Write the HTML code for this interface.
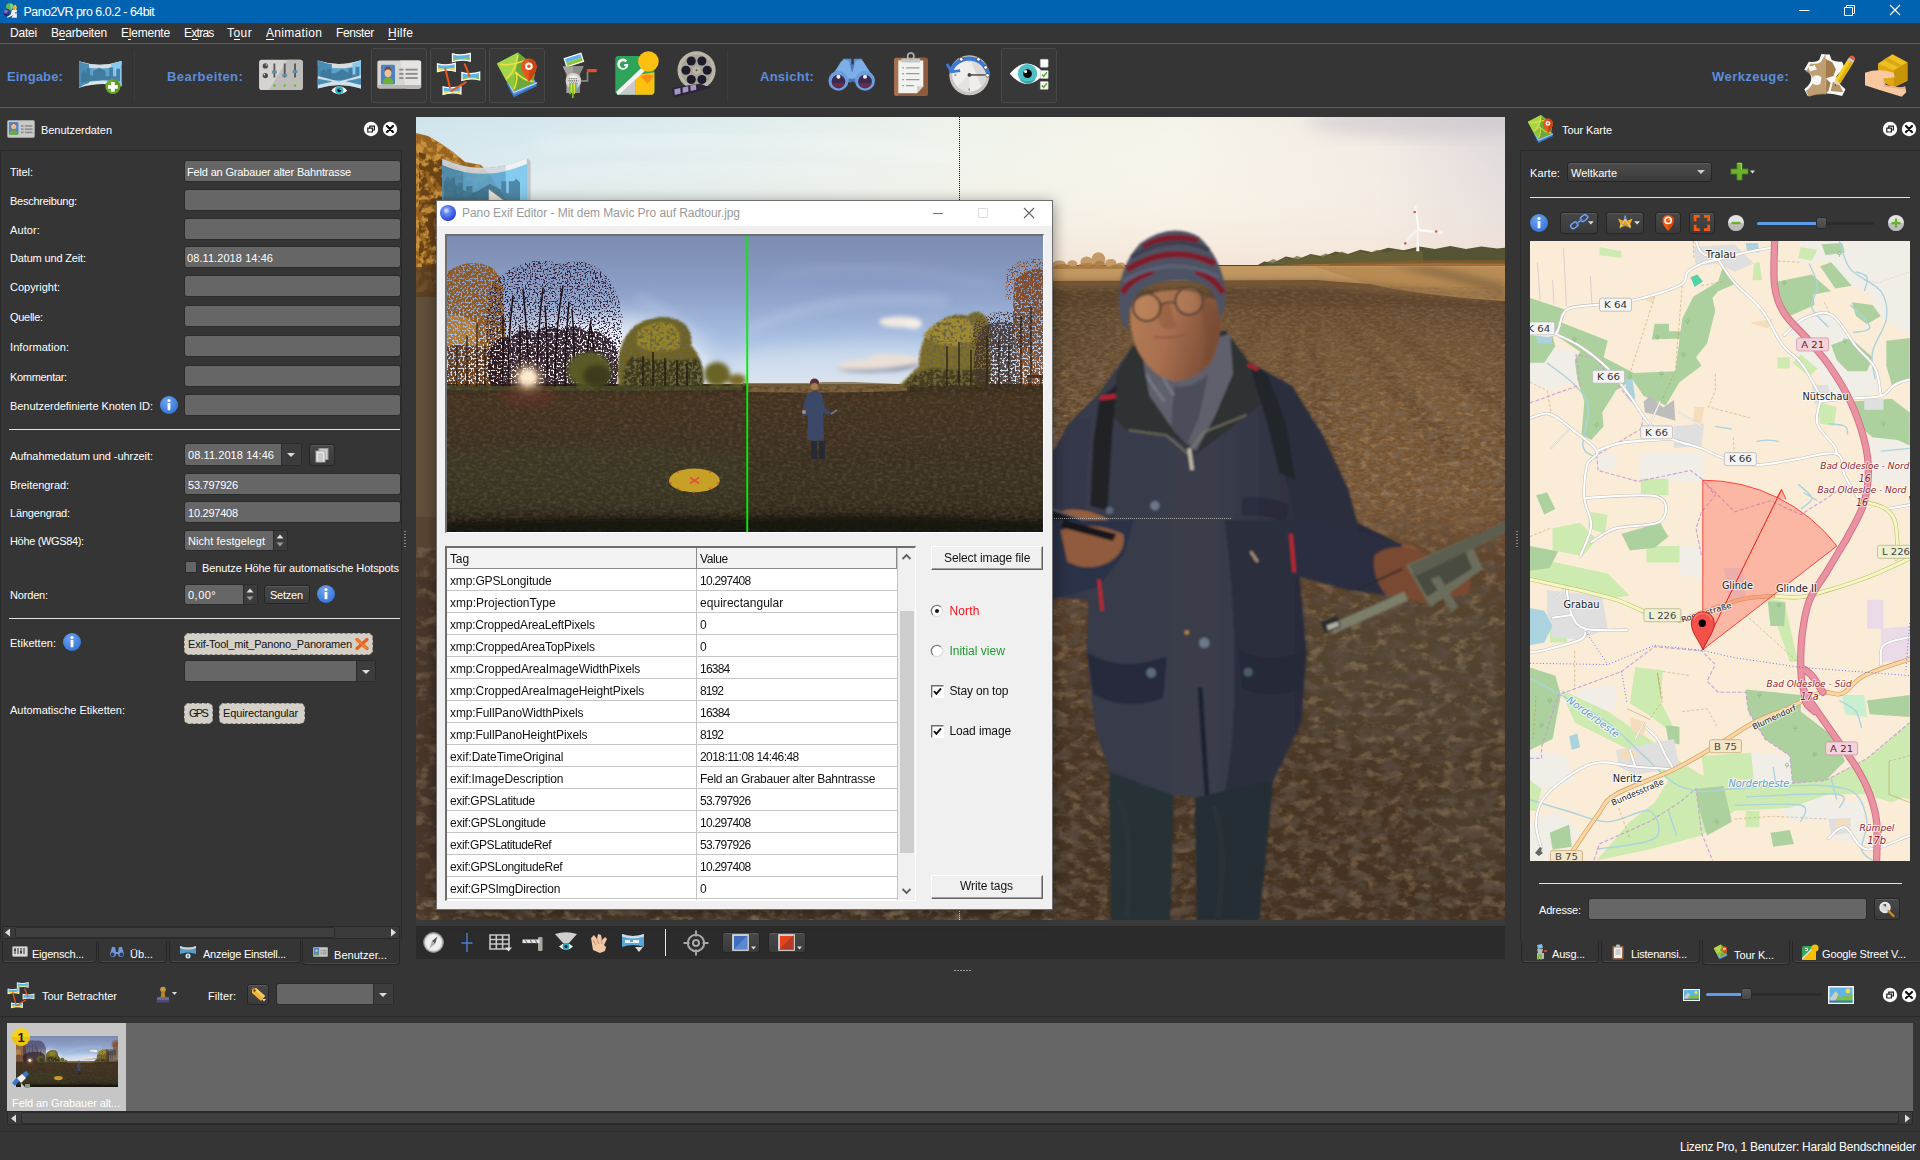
<!DOCTYPE html>
<html lang="de"><head><meta charset="utf-8"><title>Pano2VR pro 6.0.2 - 64bit</title>
<style>
html,body{margin:0;padding:0;background:#353535;overflow:hidden}
#app{position:relative;width:1920px;height:1160px;overflow:hidden;background:#353535;font-family:"Liberation Sans",sans-serif;font-size:11px;color:#fff}
#app div,#app span.t,#app svg{position:absolute;box-sizing:border-box}
span.t{white-space:pre;display:block}
.fld{background:#666;border-radius:2px;box-shadow:0 0 0 1px #2b2b2b}
.btn{background:linear-gradient(#484848,#3a3a3a);border:1px solid #262626;border-radius:3px;box-shadow:inset 0 1px 0 #5a5a5a}
.pressed{background:#383838;border:1px solid #484848;border-radius:3px}
.chip{background:#d4d0c8;border:1px dashed #8a8780;border-radius:5px}
.tab{background:#353535;border:1px solid #262626;border-top:none;border-radius:0 0 4px 4px;box-shadow:inset 0 -1px 0 #484848}
.sep{background:#e6e6e6;height:1px}
.circ{background:#fff;border-radius:50%}

</style></head>
<body>
<div id="app">
<div style="left:0px;top:0px;width:1920px;height:23px;background:#0063b1"></div>
<svg style="left:0px;top:0px" width="60" height="24" viewBox="0 0 1920 768">
<path d="M195 170q40-80 120-60 60-20 100 30l-10 130-60 70-90-40-60-50z" fill="#5cb85a"/><path d="M330 120q60-10 80 40l-10 110-50 40z" fill="#8ed0a0"/>
<path d="M420 190l70-50 50 90-20 90-100 10z" fill="#fbc21a"/><path d="M420 190l40-30 20 160-60 10z" fill="#f89a10"/>
<path d="M380 320l160 0 0 250-170 0 40-90-60 40-110 50-20-30 120-80z" fill="#f2f0ee"/><path d="M470 400l70-20v40l-60 10z" fill="#2a62c0"/>
<circle cx="212" cy="392" r="110" fill="#3c3a8c"/><circle cx="185" cy="360" r="60" fill="#7a8ad0" opacity="0.800"/><path d="M110 430a110 110 0 0 0 200 20q-100 40-200-20z" fill="#241a5c"/>
</svg>
<span class="t" id="t0" style="left:23.5px;top:3.70px;font-size:12.4px;line-height:16px;color:#fff;letter-spacing:-0.501px;">Pano2VR pro 6.0.2 - 64bit</span>
<svg style="left:1790px;top:0" width="130" height="23" viewBox="0 0 130 23" fill="none" stroke="#fff" stroke-width="1">
<path d="M9 10.5H19.5"/><path d="M54.5 7.5h8v8h-8z M56.5 7.5v-2h8v8h-2"/><path d="M100 5l10 10M110 5l-10 10" stroke-width="1.2"/></svg>
<div style="left:0px;top:23px;width:1920px;height:20px;background:#353535"></div>
<div style="left:0px;top:43px;width:1920px;height:1px;background:#5e5e5e"></div>
<span class="t" id="t1" style="left:10px;top:24.84px;font-size:12px;line-height:16px;color:#fff;letter-spacing:-0.226px;">Datei</span>
<span class="t" id="t2" style="left:51px;top:24.84px;font-size:12px;line-height:16px;color:#fff;letter-spacing:-0.215px;">Bearbeiten</span>
<span class="t" id="t3" style="left:121px;top:24.84px;font-size:12px;line-height:16px;color:#fff;letter-spacing:-0.227px;">Elemente</span>
<span class="t" id="t4" style="left:184px;top:24.84px;font-size:12px;line-height:16px;color:#fff;letter-spacing:-0.730px;">Extras</span>
<span class="t" id="t5" style="left:227px;top:24.84px;font-size:12px;line-height:16px;color:#fff;letter-spacing:0.473px;">Tour</span>
<span class="t" id="t6" style="left:266px;top:24.84px;font-size:12px;line-height:16px;color:#fff;letter-spacing:0.309px;">Animation</span>
<span class="t" id="t7" style="left:336px;top:24.84px;font-size:12px;line-height:16px;color:#fff;letter-spacing:-0.413px;">Fenster</span>
<span class="t" id="t8" style="left:388px;top:24.84px;font-size:12px;line-height:16px;color:#fff;letter-spacing:0.219px;">Hilfe</span>
<div style="left:59px;top:39px;width:6px;height:1px;background:#fff"></div>
<div style="left:128px;top:39px;width:3px;height:1px;background:#fff"></div>
<div style="left:192px;top:39px;width:6px;height:1px;background:#fff"></div>
<div style="left:234px;top:39px;width:6px;height:1px;background:#fff"></div>
<div style="left:266px;top:39px;width:8px;height:1px;background:#fff"></div>
<div style="left:388px;top:39px;width:8px;height:1px;background:#fff"></div>
<div style="left:0px;top:107px;width:1920px;height:1px;background:#5e5e5e"></div>
<span class="t" id="t9" style="left:7px;top:68.50px;font-size:13px;line-height:16px;color:#5b8ddb;font-weight:bold;letter-spacing:0.146px;">Eingabe:</span>
<span class="t" id="t10" style="left:167px;top:68.50px;font-size:13px;line-height:16px;color:#5b8ddb;font-weight:bold;letter-spacing:0.426px;">Bearbeiten:</span>
<span class="t" id="t11" style="left:760px;top:68.50px;font-size:13px;line-height:16px;color:#5b8ddb;font-weight:bold;letter-spacing:0.267px;">Ansicht:</span>
<span class="t" id="t12" style="left:1712px;top:68.50px;font-size:13px;line-height:16px;color:#5b8ddb;font-weight:bold;letter-spacing:0.449px;">Werkzeuge:</span>
<div style="left:134px;top:50px;width:1px;height:52px;background:#3d3d3d"></div>
<div style="left:727px;top:50px;width:1px;height:52px;background:#3d3d3d"></div>
<div class="pressed" style="left:371px;top:48px;width:56px;height:55px;"></div>
<div class="pressed" style="left:430px;top:48px;width:56px;height:55px;"></div>
<div class="pressed" style="left:489px;top:48px;width:56px;height:55px;"></div>
<div class="pressed" style="left:1001px;top:48px;width:56px;height:55px;"></div>
<svg style="left:0px;top:0px" width="240" height="145" viewBox="0 0 1920 1160">
<path d="M632 490Q800 545 972 488V690Q800 650 632 702z" fill="#5aa2cc"/><path d="M632 490Q800 545 972 488V520Q800 575 632 522z" fill="#d8dcdd"/><path d="M632 672Q800 622 972 660V690Q800 650 632 702z" fill="#e2e2e2"/>
<path d="M632 490Q670 505 712 514V664Q670 672 632 702z" fill="#4a8cb4"/><path d="M888 512Q930 503 972 488V690Q930 672 888 664z" fill="#86c8ee"/>
<path d="M650 640V590l20-30 20 30v-40h30v50l25 10v-40l50-30 50 30v40h30v-70h30v70h25v-60h30v100Q800 625 650 660z" fill="#3c7698" opacity="0.850"/>
<circle cx="903" cy="692" r="60" fill="#6aaa2c"/><path d="M903 632a60 60 0 0 1 0 120z" fill="#5c9a24"/><path d="M888 655h30v24h24v30h-24v24h-30v-24h-24v-30h24z" fill="#fff"/></svg>
<svg style="left:250px;top:44px" width="300" height="64" viewBox="0 0 1920 409.600">
<rect x="58" y="100" width="280" height="195" rx="18" fill="#d5d3d0"/><path d="M240 100h80a18 18 0 0 1 18 18v159a18 18 0 0 1-18 18H120z" fill="#bfbdba"/>
<circle cx="98" cy="140" r="17" fill="#4a4a4a"/><circle cx="98" cy="202" r="17" fill="#4a4a4a"/><circle cx="104" cy="134" r="5" fill="#ddd"/><circle cx="92" cy="196" r="5" fill="#ddd"/>
<path d="M156 125v90M222 125v90M288 125v90" stroke="#5a5a5a" stroke-width="12"/><rect x="140" y="170" width="32" height="18" fill="#6a8ea0"/><rect x="206" y="192" width="32" height="18" fill="#6a8ea0"/><rect x="272" y="168" width="32" height="18" fill="#6a8ea0"/>
<circle cx="156" cy="265" r="8" fill="#6cc024"/><circle cx="222" cy="265" r="8" fill="#6cc024"/><circle cx="288" cy="265" r="8" fill="#6cc024"/>
<path d="M434 106Q570 150 710 104V285Q570 240 434 285z" fill="#5aa2cc"/><path d="M434 106Q570 150 710 104V132Q570 178 434 134z" fill="#d8dcdd"/><path d="M434 106Q490 125 524 130V250Q480 262 434 285z" fill="#4a8cb4"/><path d="M656 124Q690 115 710 104V285Q680 270 656 262z" fill="#86c8ee"/>
<path d="M450 215V180l20-20 20 20v-20h30v30l30-5 40-25 40 25v-30h25v40h20v-50h25v60l8 3v30Q570 215 450 250z" fill="#3c7698" opacity="0.850"/>
<path d="M434 205L570 240 710 200V285Q570 240 434 285z" fill="#dfe7ec" opacity="0.900"/><path d="M434 222L530 240 434 262zM710 218L612 238 710 262z" fill="#4a8cb4"/>
<path d="M520 297Q570 245 622 297Q570 345 520 297z" fill="#fff"/><circle cx="571" cy="296" r="26" fill="#38b0c0"/><circle cx="571" cy="296" r="12" fill="#111"/><circle cx="577" cy="290" r="4" fill="#fff"/>
<rect x="815" y="105" width="280" height="180" rx="14" fill="#d8d6d3"/><path d="M960 105h121a14 14 0 0 1 14 14v152a14 14 0 0 1-14 14H1000z" fill="#e6e4e1"/><path d="M815 262h280v9a14 14 0 0 1-14 14H829a14 14 0 0 1-14-14z" fill="#b8b6b3"/>
<rect x="838" y="132" width="90" height="125" rx="8" fill="#4a82c4"/><path d="M848 257q0-42 35-42t35 42z" fill="#6cae38"/><ellipse cx="883" cy="186" rx="22" ry="27" fill="#f0c098"/><path d="M860 180q0-34 23-34t23 34q-8-18-23-18t-23 18z" fill="#7a4a28"/>
<rect x="955" y="158" width="28" height="12" fill="#8e8c8a"/><rect x="995" y="158" width="78" height="12" fill="#8e8c8a"/><rect x="955" y="185" width="28" height="12" fill="#8e8c8a"/><rect x="995" y="185" width="78" height="12" fill="#8e8c8a"/><rect x="955" y="212" width="28" height="12" fill="#8e8c8a"/><rect x="995" y="212" width="78" height="12" fill="#8e8c8a"/>

<g><path d="M1292 58Q1352 75 1414 55V115Q1352 98 1292 118z" fill="#fff"/><path d="M1300 68Q1352 82 1406 65V90Q1352 100 1300 92z" fill="#58b2ec"/><path d="M1300 90Q1352 100 1406 88V106Q1352 92 1300 108z" fill="#86c83c"/></g>
<g><path d="M1196 122Q1256 139 1318 119V179Q1256 162 1196 182z" fill="#fff"/><path d="M1204 132Q1256 146 1310 129V154Q1256 164 1204 156z" fill="#58b2ec"/><path d="M1204 154Q1256 164 1310 152V170Q1256 156 1204 172z" fill="#f4d63c"/></g>
<g><path d="M1352 178Q1412 195 1474 175V235Q1412 218 1352 238z" fill="#fff"/><path d="M1360 188Q1412 202 1466 185V210Q1412 220 1360 212z" fill="#58b2ec"/><path d="M1360 210Q1412 220 1466 208V226Q1412 212 1360 228z" fill="#86c83c"/></g>
<g><path d="M1232 268Q1292 285 1354 265V325Q1292 308 1232 328z" fill="#fff"/><path d="M1240 278Q1292 292 1346 275V300Q1292 310 1240 302z" fill="#58b2ec"/><path d="M1240 300Q1292 310 1346 298V316Q1292 302 1240 318z" fill="#f4d63c"/></g>
<path d="M1250 160L1280 280M1290 300L1380 245M1375 130L1405 205" stroke="#e8581c" stroke-width="13" stroke-linecap="round"/>
<path d="M1640 250L1790 200 1838 268 1688 340z" fill="#3c74c4"/><path d="M1640 235L1790 185 1838 255 1688 326z" fill="#5a9ae0"/><path d="M1640 220l48 90 150-62" fill="none" stroke="#e8e8e8" stroke-width="6"/>
<path d="M1580 125L1715 55 1830 150 1812 250 1690 300 1640 235z" fill="#8cc63c"/><path d="M1715 55L1830 150 1812 250 1690 300 1700 180z" fill="#6ca838"/><path d="M1580 125L1715 55 1700 180 1640 235z" fill="#a4d64c"/>
<path d="M1600 130Q1680 140 1760 105M1640 220Q1700 180 1715 70M1690 290Q1720 220 1700 180 1760 240 1815 240" fill="none" stroke="#f0e040" stroke-width="10"/>
<path d="M1785 92a50 50 0 0 1 50 50c0 40-50 100-50 100s-50-60-50-100a50 50 0 0 1 50-50z" fill="#e8581c"/><path d="M1785 92a50 50 0 0 1 50 50c0 40-50 100-50 100z" fill="#c84410"/><circle cx="1785" cy="142" r="24" fill="#fff"/><circle cx="1785" cy="142" r="11" fill="#e8581c"/>
</svg>
<svg style="left:550px;top:44px" width="300" height="64" viewBox="0 0 1920 409.600">
<g transform="rotate(-18 150 100)"><rect x="92" y="72" width="120" height="62" fill="#fff"/><rect x="100" y="80" width="104" height="24" fill="#62b4ee"/><rect x="100" y="104" width="104" height="22" fill="#8cc83c"/></g>
<path d="M80 142h135l-25 52v120H105V194z" fill="#a8a6a2"/><path d="M148 142h67l-25 52v120h-42z" fill="#8e8c88"/><circle cx="150" cy="236" r="50" fill="#d4d2ce"/><circle cx="150" cy="236" r="36" fill="#f0f0ee"/><path d="M120 222h60M118 236h64M122 250h56" stroke="#444" stroke-width="7" stroke-dasharray="7 5"/>
<path d="M200 236h40v-58" fill="none" stroke="#888" stroke-width="11"/><rect x="236" y="160" width="64" height="20" rx="8" fill="#e0502c"/>
<path d="M128 250v72M146 250v95M164 250v60" stroke="#7cc424" stroke-width="11"/><path d="M137 250v60M156 250v70" stroke="#f0e040" stroke-width="7"/><path d="M172 250v44" stroke="#62b4ee" stroke-width="7"/>
<rect x="418" y="76" width="250" height="248" rx="20" fill="#2ea45a"/><path d="M545 200L668 180V304a20 20 0 0 1-20 20H545z" fill="#fcc010"/><path d="M438 324L545 215V324z" fill="#c8c8c8"/>
<path d="M424 306L606 132l22 22L440 324h-8z" fill="#f4f4f4"/><path d="M580 205q50-20 88 0l-44 50z" fill="#f89010"/>
<circle cx="630" cy="112" r="66" fill="#fcc010"/>
<path d="M500 128h-24v14h10q-4 12-16 12a22 22 0 1 1 14-38l10-10a36 36 0 1 0 8 22z" fill="#fff"/>
<circle cx="938" cy="168" r="122" fill="#bab6a8"/><circle cx="938" cy="168" r="100" fill="#a8a496"/>
<g fill="#1e1c2c"><circle cx="1006" cy="168" r="29"/><circle cx="972" cy="109" r="29"/><circle cx="904" cy="109" r="29"/><circle cx="870" cy="168" r="29"/><circle cx="904" cy="227" r="29"/><circle cx="972" cy="227" r="29"/></g>
<circle cx="938" cy="168" r="24" fill="#bab6a8"/><circle cx="938" cy="168" r="7" fill="#555"/>
<path d="M780 280L960 255 1030 280 790 345z" fill="#2a2638"/><path d="M796 290l38-8 2 34-38 10zM848 278l36-8 2 34-36 10zM898 266l36-6 2 32-36 8z" fill="#a894c4"/>
</svg>
<svg style="left:810px;top:44px" width="300" height="64" viewBox="0 0 1920 409.600">
<path d="M210 95h55v150h-55zM280 95h55v150h-55z" fill="#5a8ed0"/><rect x="250" y="130" width="40" height="110" fill="#4a78b8"/>
<path d="M200 110q20-20 50 0l30 110H130z" fill="#7eaee8"/><path d="M290 110q30-20 50 0l70 110H260z" fill="#7eaee8"/>
<circle cx="182" cy="235" r="64" fill="#6a9ee0"/><circle cx="352" cy="235" r="64" fill="#6a9ee0"/><circle cx="182" cy="240" r="44" fill="#3c2a4c"/><circle cx="352" cy="240" r="44" fill="#3c2a4c"/><path d="M140 250a44 44 0 0 0 84 0z" fill="#6a2a4a"/><path d="M310 250a44 44 0 0 0 84 0z" fill="#6a2a4a"/><circle cx="182" cy="210" r="13" fill="#f0f0f0"/><circle cx="352" cy="210" r="13" fill="#f0f0f0"/>
<rect x="538" y="88" width="215" height="245" rx="14" fill="#a87250"/><path d="M700 88h39a14 14 0 0 1 14 14v217a14 14 0 0 1-14 14H560z" fill="#8e5c3c"/>
<path d="M565 105h160v165l-40 45H565z" fill="#f2f2f0"/><path d="M725 270l-40 45v-45z" fill="#cfcfcc"/><rect x="585" y="92" width="120" height="26" rx="6" fill="#c4c8c4"/><circle cx="645" cy="78" r="20" fill="none" stroke="#b4b8b4" stroke-width="10"/>
<path d="M590 152h12M615 152h85M590 190h12M615 190h85M590 228h12M615 228h85M590 266h12M615 266h50" stroke="#9a9a98" stroke-width="8"/>
<circle cx="1020" cy="200" r="128" fill="#c8c4c0"/><circle cx="1020" cy="195" r="110" fill="#f0eeec"/><path d="M1020 85a110 110 0 0 1 78 188z" fill="#dcdad8"/><path d="M1020 305a110 110 0 0 1-78-32l78-78z" fill="#e4e2e0"/>
<path d="M900 178A125 125 0 0 1 1142 200" fill="none" stroke="#3c7ad8" stroke-width="26"/><path d="M876 128l30 50 55-8" fill="none" stroke="#3c7ad8" stroke-width="18"/>
<path d="M1020 198h100" stroke="#555" stroke-width="10"/><circle cx="1020" cy="198" r="12" fill="#444"/>
<g fill="#fff" stroke="#222" stroke-width="4"><circle cx="968" cy="98" r="12"/><circle cx="1078" cy="98" r="12"/><circle cx="1124" cy="150" r="12"/><circle cx="1136" cy="200" r="12"/></g>
<rect x="1014" y="100" width="10" height="12" fill="#888"/><rect x="1014" y="285" width="10" height="12" fill="#888"/><rect x="924" y="194" width="12" height="10" fill="#888"/>
<path d="M1278 190Q1390 60 1500 190Q1390 320 1278 190z" fill="#fff"/><circle cx="1392" cy="190" r="62" fill="#4cc0c4"/><path d="M1340 224a62 62 0 0 0 104 0q-52 30-104 0z" fill="#38a4a8"/><circle cx="1392" cy="190" r="28" fill="#050505"/><circle cx="1380" cy="176" r="10" fill="#fff"/>
<g><rect x="1474" y="98" width="50" height="50" rx="4" fill="#fff" stroke="#bbb" stroke-width="4"/><rect x="1474" y="170" width="50" height="50" rx="4" fill="#fff" stroke="#bbb" stroke-width="4"/><rect x="1474" y="240" width="50" height="50" rx="4" fill="#fff" stroke="#bbb" stroke-width="4"/>
<path d="M1484 195l12 12 20-26M1484 265l12 12 20-26" fill="none" stroke="#5cb02c" stroke-width="10"/></g>
</svg>
<svg style="left:1700px;top:44px" width="220" height="64" viewBox="0 0 1920 558.500">
<path d="M1060 88q40 6 70 2l20 50q40 20 90 14l30 70q-60 20-80 60 10 60 80 110l-30 60q-160-50-300 0l-30-60q70-50 60-110-10-40-60-60l40-70q60 10 90-14z" fill="#f8f8f6"/>
<path d="M1095 90l5 350q-70-6-150 20l-25-50q70-50 60-110-10-40-60-60l40-70q60 10 90-14z" fill="#b89464" opacity="0.900"/>
<path d="M1095 130l60 30 30 60-20 60-70 20z" fill="#a47c4c"/><path d="M990 280q40-20 70 10l-10 60q-40 20-80-10z" fill="#f8f8f6"/><path d="M1160 330l60 30 30 60-110-10z" fill="#b89464"/><path d="M940 190q40 10 60-10l20 40-60 20z" fill="#f8f8f6"/><path d="M1100 300l40 40-20 70-20 20z" fill="#a47c4c"/>
<g transform="rotate(32 1250 250)"><rect x="1222" y="130" width="56" height="210" fill="#f4d020"/><rect x="1250" y="130" width="28" height="210" fill="#e0b010"/><path d="M1222 340h56l-28 52z" fill="#f0d0a0"/><path d="M1240 372h20l-10 20z" fill="#444"/><rect x="1222" y="108" width="56" height="26" fill="#c8c8c8"/><path d="M1222 108a28 28 0 0 1 56 0z" fill="#e0603c"/></g>
<path d="M1555 170L1680 90l130 70v160l-120 60-135-70z" fill="#f0c020"/><path d="M1555 170l135 60v150l-135-70z" fill="#e0a810"/><path d="M1690 230l120-70v160l-120 60z" fill="#c89408"/><path d="M1600 140l130 62 30-18-126-66z" fill="#d8a818"/>
<path d="M1440 250q120-40 250 0l10 40-100 10 20 60 130 20 40-10 10 50-40 40-200-60-120-40z" fill="#f8c8a0"/><path d="M1600 300l20 60 130 20 40-10 5 30-190-30z" fill="#e8b088"/>
</svg>
<div style="left:0px;top:150px;width:402px;height:790px;border-top:1px solid #2a2a2a;border-left:1px solid #2a2a2a;border-right:1px solid #2a2a2a;background:#353535"></div>
<svg style="left:7px;top:120px" width="28" height="18" viewBox="0 0 44 28" preserveAspectRatio="none">
<rect x="0.5" y="0.5" width="43" height="27" rx="3" fill="#c9c9c7" stroke="#9b9b99"/>
<rect x="3" y="3" width="15" height="20" rx="1.5" fill="#4f86c6"/>
<circle cx="10.5" cy="10" r="4" fill="#f0b98a"/><path d="M6.5 8.5q4-5 8 0v-1q-4-4-8 0z" fill="#7a4a24"/>
<path d="M4 23q0-7 6.5-7t6.500 7z" fill="#6bab3a"/>
<rect x="22" y="8" width="4" height="2.600" fill="#8d8d8b"/><rect x="28" y="8" width="12" height="2.600" fill="#8d8d8b"/>
<rect x="22" y="13" width="4" height="2.600" fill="#8d8d8b"/><rect x="28" y="13" width="12" height="2.600" fill="#8d8d8b"/>
<rect x="22" y="18" width="4" height="2.600" fill="#8d8d8b"/><rect x="28" y="18" width="12" height="2.600" fill="#8d8d8b"/></svg>
<span class="t" id="t13" style="left:41px;top:122.19px;font-size:11px;line-height:16px;color:#fff;letter-spacing:-0.045px;">Benutzerdaten</span>
<svg style="left:363px;top:121px" width="35" height="16" viewBox="0 0 35 16">
<circle cx="8" cy="8" r="7.2" fill="#fff"/><circle cx="27" cy="8" r="7.2" fill="#fff"/>
<path d="M4.8 7.2h4.6v3.8H4.8z M6.8 7v-1.8h4.6v3.8H9.6" fill="none" stroke="#222" stroke-width="1.2"/>
<path d="M24 5l6 6M30 5l-6 6" stroke="#111" stroke-width="2.2" stroke-linecap="round"/></svg>
<span class="t" id="t14" style="left:10px;top:164.19px;font-size:11px;line-height:16px;color:#fff;letter-spacing:-0.080px;">Titel:</span>
<div class="fld" style="left:185px;top:161px;width:215px;height:20px;"></div>
<span class="t" id="t15" style="left:10px;top:193.19px;font-size:11px;line-height:16px;color:#fff;letter-spacing:-0.266px;">Beschreibung:</span>
<div class="fld" style="left:185px;top:190px;width:215px;height:20px;"></div>
<span class="t" id="t16" style="left:10px;top:222.19px;font-size:11px;line-height:16px;color:#fff;letter-spacing:0.116px;">Autor:</span>
<div class="fld" style="left:185px;top:219px;width:215px;height:20px;"></div>
<span class="t" id="t17" style="left:10px;top:250.19px;font-size:11px;line-height:16px;color:#fff;letter-spacing:-0.156px;">Datum und Zeit:</span>
<div class="fld" style="left:185px;top:247px;width:215px;height:20px;"></div>
<span class="t" id="t18" style="left:10px;top:279.19px;font-size:11px;line-height:16px;color:#fff;letter-spacing:-0.015px;">Copyright:</span>
<div class="fld" style="left:185px;top:276px;width:215px;height:20px;"></div>
<span class="t" id="t19" style="left:10px;top:309.19px;font-size:11px;line-height:16px;color:#fff;letter-spacing:-0.286px;">Quelle:</span>
<div class="fld" style="left:185px;top:306px;width:215px;height:20px;"></div>
<span class="t" id="t20" style="left:10px;top:339.19px;font-size:11px;line-height:16px;color:#fff;letter-spacing:0.079px;">Information:</span>
<div class="fld" style="left:185px;top:336px;width:215px;height:20px;"></div>
<span class="t" id="t21" style="left:10px;top:369.19px;font-size:11px;line-height:16px;color:#fff;letter-spacing:-0.308px;">Kommentar:</span>
<div class="fld" style="left:185px;top:366px;width:215px;height:20px;"></div>
<span class="t" id="t22" style="left:10px;top:398.19px;font-size:11px;line-height:16px;color:#fff;letter-spacing:-0.046px;">Benutzerdefinierte Knoten ID:</span>
<div class="fld" style="left:185px;top:395px;width:215px;height:20px;"></div>
<span class="t" id="t23" style="left:187px;top:164.19px;font-size:11px;line-height:16px;color:#fff;letter-spacing:-0.165px;">Feld an Grabauer alter Bahntrasse</span>
<span class="t" id="t24" style="left:187px;top:250.19px;font-size:11px;line-height:16px;color:#fff;letter-spacing:0.076px;">08.11.2018 14:46</span>
<svg style="left:159px;top:395px" width="20" height="20" viewBox="-10 -10 20 20">
<defs><radialGradient id="ig169405" cx="0.4" cy="0.3" r="0.8"><stop offset="0" stop-color="#6fa3ee"/><stop offset="1" stop-color="#2f6fd6"/></radialGradient></defs>
<circle r="9" fill="url(#ig169405)"/><circle cx="0" cy="-4.600" r="1.500" fill="#fff"/><rect x="-1.400" y="-2" width="2.800" height="7.200" rx="0.600" fill="#fff"/></svg>
<div style="left:9px;top:429px;width:391px;height:2px;background:#e4e4e4;height:1px"></div>
<span class="t" id="t25" style="left:10px;top:448.19px;font-size:11px;line-height:16px;color:#fff;letter-spacing:-0.073px;">Aufnahmedatum und -uhrzeit:</span>
<div class="fld" style="left:185px;top:444px;width:116px;height:21px;"></div>
<div style="left:281px;top:444px;width:20px;height:21px;background:#3c3c3c;border-left:1px solid #2b2b2b;border-radius:0 2px 2px 0"></div>
<svg style="left:287px;top:453.0px" width="8" height="5" viewBox="0 0 8 5"><path d="M0 0h8l-4 4z" fill="#ddd"/></svg>
<span class="t" id="t26" style="left:188px;top:447.19px;font-size:11px;line-height:16px;color:#fff;letter-spacing:0.076px;">08.11.2018 14:46</span>
<div class="btn" style="left:309px;top:444px;width:26px;height:22px;"></div>
<svg style="left:315px;top:448px" width="14" height="15" viewBox="0 0 14 15"><rect x="4" y="0.500" width="9" height="11" fill="#cfcfcf" stroke="#9a9a9a"/><rect x="1" y="3" width="9" height="11" fill="#e9e9e9" stroke="#a5a5a5"/><path d="M3 6h5M3 8h5M3 10h5M3 12h5" stroke="#aaa"/></svg>
<span class="t" id="t27" style="left:10px;top:477.19px;font-size:11px;line-height:16px;color:#fff;letter-spacing:-0.082px;">Breitengrad:</span>
<div class="fld" style="left:185px;top:474px;width:215px;height:20px;"></div>
<span class="t" id="t28" style="left:188px;top:477.19px;font-size:11px;line-height:16px;color:#fff;letter-spacing:-0.235px;">53.797926</span>
<span class="t" id="t29" style="left:10px;top:505.19px;font-size:11px;line-height:16px;color:#fff;letter-spacing:-0.170px;">Längengrad:</span>
<div class="fld" style="left:185px;top:502px;width:215px;height:20px;"></div>
<span class="t" id="t30" style="left:188px;top:505.19px;font-size:11px;line-height:16px;color:#fff;letter-spacing:-0.235px;">10.297408</span>
<span class="t" id="t31" style="left:10px;top:533.19px;font-size:11px;line-height:16px;color:#fff;letter-spacing:-0.340px;">Höhe (WGS84):</span>
<div class="fld" style="left:185px;top:531px;width:102px;height:19px;"></div>
<svg style="left:273px;top:531px" width="14" height="19" viewBox="0 0 14 19"><rect x="0" y="0" width="14" height="19" fill="#3c3c3c"/><rect x="0" y="0" width="1" height="19" fill="#2b2b2b"/><path d="M3.500 7.5h7l-3.500-4z" fill="#ddd"/><path d="M3.500 11.5h7l-3.500 4z" fill="#999"/></svg>
<span class="t" id="t32" style="left:188px;top:533.19px;font-size:11px;line-height:16px;color:#fff;letter-spacing:0.076px;">Nicht festgelegt</span>
<div style="left:185px;top:561px;width:12px;height:12px;background:#666;border:1px solid #2b2b2b"></div>
<span class="t" id="t33" style="left:202px;top:560.19px;font-size:11px;line-height:16px;color:#fff;letter-spacing:-0.095px;">Benutze Höhe für automatische Hotspots</span>
<span class="t" id="t34" style="left:10px;top:587.19px;font-size:11px;line-height:16px;color:#fff;letter-spacing:-0.175px;">Norden:</span>
<div class="fld" style="left:185px;top:585px;width:72px;height:19px;"></div>
<svg style="left:243px;top:585px" width="14" height="19" viewBox="0 0 14 19"><rect x="0" y="0" width="14" height="19" fill="#3c3c3c"/><rect x="0" y="0" width="1" height="19" fill="#2b2b2b"/><path d="M3.500 7.5h7l-3.500-4z" fill="#ddd"/><path d="M3.500 11.5h7l-3.500 4z" fill="#999"/></svg>
<span class="t" id="t35" style="left:188px;top:587.19px;font-size:11px;line-height:16px;color:#fff;letter-spacing:0.486px;">0,00°</span>
<div class="btn" style="left:264px;top:585px;width:46px;height:19px;"></div>
<span class="t" id="t36" style="left:270px;top:587.19px;font-size:11px;line-height:16px;color:#fff;letter-spacing:-0.227px;">Setzen</span>
<svg style="left:316px;top:584px" width="20" height="20" viewBox="-10 -10 20 20">
<defs><radialGradient id="ig326594" cx="0.4" cy="0.3" r="0.8"><stop offset="0" stop-color="#6fa3ee"/><stop offset="1" stop-color="#2f6fd6"/></radialGradient></defs>
<circle r="9" fill="url(#ig326594)"/><circle cx="0" cy="-4.600" r="1.500" fill="#fff"/><rect x="-1.400" y="-2" width="2.800" height="7.200" rx="0.600" fill="#fff"/></svg>
<div style="left:9px;top:618px;width:391px;height:2px;background:#e4e4e4;height:1px"></div>
<span class="t" id="t37" style="left:10px;top:635.19px;font-size:11px;line-height:16px;color:#fff;letter-spacing:0.015px;">Etiketten:</span>
<svg style="left:62px;top:632px" width="20" height="20" viewBox="-10 -10 20 20">
<defs><radialGradient id="ig72642" cx="0.4" cy="0.3" r="0.8"><stop offset="0" stop-color="#6fa3ee"/><stop offset="1" stop-color="#2f6fd6"/></radialGradient></defs>
<circle r="9" fill="url(#ig72642)"/><circle cx="0" cy="-4.600" r="1.500" fill="#fff"/><rect x="-1.400" y="-2" width="2.800" height="7.200" rx="0.600" fill="#fff"/></svg>
<div class="chip" style="left:184px;top:633px;width:189px;height:22px;"></div>
<span class="t" id="t38" style="left:188px;top:636.19px;font-size:11px;line-height:16px;color:#111;letter-spacing:-0.203px;">Exif-Tool_mit_Panono_Panoramen</span>
<svg style="left:355px;top:637px" width="14" height="14" viewBox="0 0 14 14"><path d="M2 2.500l10 9M12 2.500l-10 9" stroke="#e8621c" stroke-width="3.200" stroke-linecap="round"/><path d="M2 2.500l10 9" stroke="#f08b3c" stroke-width="1.200" stroke-linecap="round"/></svg>
<div class="fld" style="left:185px;top:661px;width:190px;height:20px;"></div>
<div style="left:356px;top:661px;width:19px;height:20px;background:#3c3c3c;border-left:1px solid #2b2b2b;border-radius:0 2px 2px 0"></div>
<svg style="left:362px;top:670.0px" width="8" height="5" viewBox="0 0 8 5"><path d="M0 0h8l-4 4z" fill="#ddd"/></svg>
<span class="t" id="t39" style="left:10px;top:702.19px;font-size:11px;line-height:16px;color:#fff;letter-spacing:-0.025px;">Automatische Etiketten:</span>
<div class="chip" style="left:184px;top:703px;width:29px;height:21px;"></div>
<span class="t" id="t40" style="left:189px;top:705.19px;font-size:11px;line-height:16px;color:#111;letter-spacing:-1.694px;">GPS</span>
<div class="chip" style="left:219px;top:703px;width:86px;height:21px;"></div>
<span class="t" id="t41" style="left:223px;top:705.19px;font-size:11px;line-height:16px;color:#111;letter-spacing:-0.142px;">Equirectangular</span>
<div style="left:404px;top:531px;width:2px;height:1px;background:#888"></div>
<div style="left:404px;top:534px;width:2px;height:1px;background:#888"></div>
<div style="left:404px;top:537px;width:2px;height:1px;background:#888"></div>
<div style="left:404px;top:540px;width:2px;height:1px;background:#888"></div>
<div style="left:404px;top:543px;width:2px;height:1px;background:#888"></div>
<div style="left:404px;top:546px;width:2px;height:1px;background:#888"></div>
<div style="left:2px;top:926px;width:398px;height:13px;background:#3b3b3b;border:1px solid #2a2a2a"></div>
<div style="left:15px;top:927px;width:320px;height:11px;background:#3f3f3f;border:1px solid #2c2c2c;border-radius:2px"></div>
<svg style="left:4px;top:928px" width="8" height="9" viewBox="0 0 8 9"><path d="M6 0.500v8l-5-4z" fill="#ddd"/></svg>
<svg style="left:389px;top:928px" width="8" height="9" viewBox="0 0 8 9"><path d="M2 0.500v8l5-4z" fill="#ddd"/></svg>
<div class="tab" style="left:2px;top:941px;width:95px;height:22px;"></div>
<div class="tab" style="left:98px;top:941px;width:69px;height:22px;"></div>
<div class="tab" style="left:169px;top:941px;width:132px;height:22px;"></div>
<div class="tab" style="left:302px;top:940px;width:98px;height:25px;border-color:#262626;background:#353535"></div>
<span class="t" id="t42" style="left:32px;top:946.19px;font-size:11px;line-height:16px;color:#fff;letter-spacing:-0.231px;">Eigensch...</span>
<span class="t" id="t43" style="left:130px;top:946.19px;font-size:11px;line-height:16px;color:#fff;letter-spacing:-0.052px;">Üb...</span>
<span class="t" id="t44" style="left:203px;top:946.19px;font-size:11px;line-height:16px;color:#fff;letter-spacing:-0.240px;">Anzeige Einstell...</span>
<span class="t" id="t45" style="left:334px;top:947.19px;font-size:11px;line-height:16px;color:#fff;letter-spacing:0.039px;">Benutzer...</span>
<svg style="left:12px;top:946px" width="16" height="12" viewBox="0 0 16 12"><rect x="0.500" y="0.500" width="15" height="10" rx="1" fill="#d8d8d8" stroke="#999"/><path d="M3 2v6M6 2v6M9 2v6M12 2v6" stroke="#666" stroke-width="1.500"/><rect x="2" y="3" width="2" height="2" fill="#444"/><rect x="8" y="5" width="2" height="2" fill="#444"/></svg>
<svg style="left:109px;top:946px" width="16" height="12" viewBox="0 0 16 12"><path d="M3 1h3l1 5h2l1-5h3l2 7a3 3 0 0 1-6 0h-2a3 3 0 0 1-6 0z" fill="#6d9ad6"/><circle cx="3.500" cy="8.500" r="2" fill="#3c3560"/><circle cx="12.500" cy="8.500" r="2" fill="#3c3560"/></svg>
<svg style="left:180px;top:946px" width="16" height="13" viewBox="0 0 16 13"><path d="M0 0q8 3 16 0v8q-8-3-16 0z" fill="#5a9cc8"/><path d="M0 0q8 3 16 0v2q-8 3-16 0z" fill="#d5d5d5"/><circle cx="8" cy="10" r="2.500" fill="#e8e8e8"/><circle cx="8" cy="10" r="1.200" fill="#2a9aa8"/></svg>
<svg style="left:313px;top:947px" width="15" height="10" viewBox="0 0 44 28" preserveAspectRatio="none">
<rect x="0.5" y="0.5" width="43" height="27" rx="3" fill="#c9c9c7" stroke="#9b9b99"/>
<rect x="3" y="3" width="15" height="20" rx="1.5" fill="#4f86c6"/>
<circle cx="10.5" cy="10" r="4" fill="#f0b98a"/><path d="M6.5 8.5q4-5 8 0v-1q-4-4-8 0z" fill="#7a4a24"/>
<path d="M4 23q0-7 6.5-7t6.500 7z" fill="#6bab3a"/>
<rect x="22" y="8" width="4" height="2.600" fill="#8d8d8b"/><rect x="28" y="8" width="12" height="2.600" fill="#8d8d8b"/>
<rect x="22" y="13" width="4" height="2.600" fill="#8d8d8b"/><rect x="28" y="13" width="12" height="2.600" fill="#8d8d8b"/>
<rect x="22" y="18" width="4" height="2.600" fill="#8d8d8b"/><rect x="28" y="18" width="12" height="2.600" fill="#8d8d8b"/></svg>
<div style="left:1520px;top:150px;width:400px;height:790px;border-top:1px solid #2a2a2a;border-left:1px solid #2a2a2a;background:#353535"></div>
<svg style="left:1527px;top:114px" width="27" height="30" viewBox="1572 46 274 304"><path d="M1640 250L1790 200 1838 268 1688 340z" fill="#3c74c4"/><path d="M1640 235L1790 185 1838 255 1688 326z" fill="#5a9ae0"/><path d="M1640 220l48 90 150-62" fill="none" stroke="#e8e8e8" stroke-width="6"/>
<path d="M1580 125L1715 55 1830 150 1812 250 1690 300 1640 235z" fill="#8cc63c"/><path d="M1715 55L1830 150 1812 250 1690 300 1700 180z" fill="#6ca838"/><path d="M1580 125L1715 55 1700 180 1640 235z" fill="#a4d64c"/>
<path d="M1600 130Q1680 140 1760 105M1640 220Q1700 180 1715 70M1690 290Q1720 220 1700 180 1760 240 1815 240" fill="none" stroke="#f0e040" stroke-width="10"/>
<path d="M1785 92a50 50 0 0 1 50 50c0 40-50 100-50 100s-50-60-50-100a50 50 0 0 1 50-50z" fill="#e8581c"/><path d="M1785 92a50 50 0 0 1 50 50c0 40-50 100-50 100z" fill="#c84410"/><circle cx="1785" cy="142" r="24" fill="#fff"/><circle cx="1785" cy="142" r="11" fill="#e8581c"/>
</svg>
<span class="t" id="t46" style="left:1562px;top:122.19px;font-size:11px;line-height:16px;color:#fff;letter-spacing:-0.079px;">Tour Karte</span>
<svg style="left:1882px;top:121px" width="35" height="16" viewBox="0 0 35 16">
<circle cx="8" cy="8" r="7.2" fill="#fff"/><circle cx="27" cy="8" r="7.2" fill="#fff"/>
<path d="M4.8 7.2h4.6v3.8H4.8z M6.8 7v-1.8h4.6v3.8H9.6" fill="none" stroke="#222" stroke-width="1.2"/>
<path d="M24 5l6 6M30 5l-6 6" stroke="#111" stroke-width="2.2" stroke-linecap="round"/></svg>
<span class="t" id="t47" style="left:1530px;top:165.19px;font-size:11px;line-height:16px;color:#fff;letter-spacing:0.116px;">Karte:</span>
<div style="left:1567px;top:162px;width:145px;height:20px;background:linear-gradient(#4b4b4b,#3c3c3c);border:1px solid #252525;border-radius:3px;box-shadow:inset 0 1px 0 #5c5c5c"></div>
<span class="t" id="t48" style="left:1571px;top:165.19px;font-size:11px;line-height:16px;color:#fff;letter-spacing:-0.031px;">Weltkarte</span>
<svg style="left:1697px;top:170.0px" width="8" height="5" viewBox="0 0 8 5"><path d="M0 0h8l-4 4z" fill="#ccc"/></svg>
<svg style="left:1730px;top:162px" width="28" height="20" viewBox="0 0 28 20"><path d="M7 1h5v6h6v5h-6v6h-5v-6h-6v-5h6z" fill="#6bb12c" stroke="#4a8a18" stroke-width="0.800"/><path d="M7.500 1.500h4v6" stroke="#9ad85a" fill="none"/><path d="M20 8.500h5l-2.500 3z" fill="#ddd"/></svg>
<div style="left:1530px;top:197px;width:380px;height:1px;background:#e4e4e4"></div>
<svg style="left:1529px;top:213px" width="20" height="20" viewBox="-10 -10 20 20">
<defs><radialGradient id="ig1539223" cx="0.4" cy="0.3" r="0.8"><stop offset="0" stop-color="#6fa3ee"/><stop offset="1" stop-color="#2f6fd6"/></radialGradient></defs>
<circle r="9" fill="url(#ig1539223)"/><circle cx="0" cy="-4.600" r="1.500" fill="#fff"/><rect x="-1.400" y="-2" width="2.800" height="7.200" rx="0.600" fill="#fff"/></svg>
<div class="btn" style="left:1560px;top:212px;width:38px;height:22px;"></div>
<div class="btn" style="left:1606px;top:212px;width:38px;height:22px;"></div>
<div class="btn" style="left:1655px;top:212px;width:26px;height:22px;"></div>
<div class="btn" style="left:1689px;top:212px;width:26px;height:22px;"></div>
<svg style="left:1525px;top:205px" width="200" height="36" viewBox="0 0 1920 345.600">
<g fill="none" stroke-linecap="round"><g transform="rotate(-37 520 160)"><rect x="425" y="136" width="74" height="48" rx="24" stroke="#4a7ccc" stroke-width="17"/><rect x="541" y="136" width="74" height="48" rx="24" stroke="#4a7ccc" stroke-width="17"/><rect x="425" y="136" width="74" height="48" rx="24" stroke="#8ab4ec" stroke-width="8"/><rect x="541" y="136" width="74" height="48" rx="24" stroke="#8ab4ec" stroke-width="8"/><path d="M488 160h64" stroke="#3c6cbc" stroke-width="19"/><path d="M488 160h64" stroke="#7aa6e4" stroke-width="9"/></g></g>
<path d="M604 156h56l-28 30z" fill="#ddd"/>
<path d="M893 130l50 22 20-30 20 30 50-22-22 50 8 36-56-14-56 14 8-36z" fill="#f4b824"/><path d="M915 150l45 10 45-10-15 40-30 10-30-10z" fill="#e8a010"/>
<path d="M962 128l-48 96M962 128l48 96" stroke="#c8d0dc" stroke-width="9"/><path d="M932 190q30 16 60 0" fill="none" stroke="#5a8ad0" stroke-width="8"/><circle cx="962" cy="124" r="13" fill="#5a8ad0"/><path d="M962 100v20" stroke="#c8d0dc" stroke-width="8"/>
<path d="M1048 156h56l-28 30z" fill="#ddd"/>
<path d="M1374 95a55 55 0 0 1 55 55c0 40-55 98-55 98s-55-58-55-98a55 55 0 0 1 55-55z" fill="#f05a12"/><path d="M1374 95a55 55 0 0 1 55 55c0 40-55 98-55 98z" fill="#d84808"/><circle cx="1374" cy="148" r="30" fill="none" stroke="#fff" stroke-width="14"/><circle cx="1382" cy="142" r="7" fill="#fff"/>
<g fill="#f45a10"><path d="M1620 97h58v26h-32v34h-26z"/><path d="M1776 97h-58v26h32v34h26z"/><path d="M1620 250h58v-26h-32v-34h-26z"/><path d="M1776 250h-58v-26h32v-34h26z"/></g>
</svg>
<svg style="left:1727px;top:214px" width="18" height="18" viewBox="-9 -9 18 18"><circle r="8" fill="#e4e4e4"/><path d="M-8 0a8 8 0 0 0 16 0z" fill="#9a9a9a" opacity="0.550"/><path d="M-4.500 -1.200h9v2.400h-9z" fill="#6bb12c"/></svg>
<svg style="left:1887px;top:214px" width="18" height="18" viewBox="-9 -9 18 18"><circle r="8" fill="#e4e4e4"/><path d="M-8 0a8 8 0 0 0 16 0z" fill="#9a9a9a" opacity="0.550"/><path d="M-4.500 -1.200h9v2.400h-9z" fill="#6bb12c"/><path d="M-1.200 -4.500h2.400v9h-2.400z" fill="#6bb12c"/></svg>
<div style="left:1757px;top:221.5px;width:117px;height:3px;background:#2c2c2c;border-radius:2px;height:3px"></div>
<div style="left:1757px;top:221.5px;width:64px;height:3px;background:#5e9cf0;border-radius:2px;height:3px"></div>
<div style="left:1815.5px;top:217.0px;width:11px;height:12px;background:linear-gradient(#5a5a5a,#474747);border:1px solid #2a2a2a;border-radius:2.500px"></div>
<div style="left:1530px;top:241px;width:380px;height:620px;background:#f6e7d0"></div>
<div style="left:1539px;top:883px;width:363px;height:1px;background:#e4e4e4"></div>
<span class="t" id="t49" style="left:1539px;top:902.19px;font-size:11px;line-height:16px;color:#fff;letter-spacing:-0.190px;">Adresse:</span>
<div class="fld" style="left:1589px;top:899px;width:277px;height:20px;"></div>
<div class="btn" style="left:1874px;top:898px;width:26px;height:22px;"></div>
<svg style="left:1878px;top:901px" width="18" height="17" viewBox="0 0 18 17"><circle cx="7" cy="6.500" r="5" fill="#d8d8d8" stroke="#eee" stroke-width="1.400"/><path d="M5 4a3 3 0 0 1 3-1v3z" fill="#555"/><path d="M10.500 10l5 5" stroke="#c98a2c" stroke-width="2.400" stroke-linecap="round"/></svg>
<div class="tab" style="left:1521px;top:941px;width:78px;height:22px;"></div>
<div class="tab" style="left:1601px;top:941px;width:99px;height:22px;"></div>
<div class="tab" style="left:1702px;top:940px;width:88px;height:25px;"></div>
<div class="tab" style="left:1792px;top:941px;width:130px;height:22px;"></div>
<span class="t" id="t50" style="left:1552px;top:946.19px;font-size:11px;line-height:16px;color:#fff;letter-spacing:-0.192px;">Ausg...</span>
<span class="t" id="t51" style="left:1631px;top:946.19px;font-size:11px;line-height:16px;color:#fff;letter-spacing:-0.216px;">Listenansi...</span>
<span class="t" id="t52" style="left:1734px;top:947.19px;font-size:11px;line-height:16px;color:#fff;letter-spacing:-0.114px;">Tour K...</span>
<span class="t" id="t53" style="left:1822px;top:946.19px;font-size:11px;line-height:16px;color:#fff;letter-spacing:-0.139px;">Google Street V...</span>
<svg style="left:1534px;top:944px" width="14" height="16" viewBox="0 0 14 16"><path d="M3 1l5-1 1 4-5 1z" fill="#7fc0e8"/><path d="M3 5h6l-1 4h2v6h-7v-6h1z" fill="#b8b8b8"/><path d="M5 10l-1 6M7 10v6" stroke="#6bb12c" stroke-width="1.200"/><path d="M10 7h3" stroke="#e8602c" stroke-width="1.400"/></svg>
<svg style="left:1612px;top:944px" width="12" height="16" viewBox="0 0 12 16"><rect x="0.500" y="2" width="11" height="13.500" rx="1" fill="#9b6a48"/><rect x="2" y="3.500" width="8" height="10.500" fill="#efefef"/><rect x="4" y="0.500" width="4" height="3" rx="1" fill="#bbb"/><path d="M3.500 6h5M3.500 8h5M3.500 10h5" stroke="#aaa"/></svg>
<svg style="left:1713px;top:944px" width="15" height="16" viewBox="1572 46 274 304"><path d="M1640 250L1790 200 1838 268 1688 340z" fill="#3c74c4"/><path d="M1640 235L1790 185 1838 255 1688 326z" fill="#5a9ae0"/><path d="M1640 220l48 90 150-62" fill="none" stroke="#e8e8e8" stroke-width="6"/>
<path d="M1580 125L1715 55 1830 150 1812 250 1690 300 1640 235z" fill="#8cc63c"/><path d="M1715 55L1830 150 1812 250 1690 300 1700 180z" fill="#6ca838"/><path d="M1580 125L1715 55 1700 180 1640 235z" fill="#a4d64c"/>
<path d="M1600 130Q1680 140 1760 105M1640 220Q1700 180 1715 70M1690 290Q1720 220 1700 180 1760 240 1815 240" fill="none" stroke="#f0e040" stroke-width="10"/>
<path d="M1785 92a50 50 0 0 1 50 50c0 40-50 100-50 100s-50-60-50-100a50 50 0 0 1 50-50z" fill="#e8581c"/><path d="M1785 92a50 50 0 0 1 50 50c0 40-50 100-50 100z" fill="#c84410"/><circle cx="1785" cy="142" r="24" fill="#fff"/><circle cx="1785" cy="142" r="11" fill="#e8581c"/>
</svg>
<svg style="left:1802px;top:944px" width="17" height="16" viewBox="0 0 17 16"><rect x="0" y="2" width="14" height="14" rx="2" fill="#3aa757"/><path d="M0 16l14-14v14z" fill="#fbbc04"/><path d="M0 14l12-12h2l-14 14z" fill="#e8e8e8"/><circle cx="13" cy="4" r="3.600" fill="#fbbc04"/><path d="M3 4.500h2.500v2h-2" stroke="#fff" fill="none" stroke-width="0.900"/></svg>
<div style="left:1516px;top:531px;width:2px;height:1px;background:#888"></div>
<div style="left:1516px;top:534px;width:2px;height:1px;background:#888"></div>
<div style="left:1516px;top:537px;width:2px;height:1px;background:#888"></div>
<div style="left:1516px;top:540px;width:2px;height:1px;background:#888"></div>
<div style="left:1516px;top:543px;width:2px;height:1px;background:#888"></div>
<div style="left:1516px;top:546px;width:2px;height:1px;background:#888"></div>
<svg style="left:1530px;top:241px" width="380" height="620" viewBox="0 0 380 620"><rect width="380" height="620" fill="#fbecd7"/>
<g transform="translate(-5 -5) scale(0.275810)"><path d="M960 300 1100 280 1160 350 1240 420 1280 560 1180 600 1080 560 1060 480 980 420z M1000 18 1395 18 1395 360 1300 300 1240 200 1180 180 1100 90 1000 100z M18 390 190 420 200 520 100 560 18 540z M415 790 650 790 650 890 415 890z M260 790 330 790 330 850 260 850z M1290 640 1395 640 1395 900 1250 900 1240 760z M190 1644 330 1624 330 1714 200 1724z M18 1864 150 1884 180 1974 18 2024z M560 1124 640 1124 640 1244 560 1224z M820 1874 960 1884 970 1984 830 1974z M900 2024 1100 2024 1180 2124 960 2124z M18 2124 120 2084 200 2164 120 2264 18 2264z M1100 2054 1230 2044 1230 2204 1110 2184z" fill="#f1eee8"/><path d="M270 40 350 55 350 80 270 70z M1000 430 1060 480 1030 510 970 460z M915 440 960 440 960 480 915 480z M100 1060 200 1040 260 1100 210 1160 100 1140z M1000 40 1060 50 1040 90 990 80z M830 100 850 95 860 160 825 160z M420 880 520 880 520 940 420 940z M230 1000 300 1010 290 1080 230 1060z M1060 600 1130 620 1120 690 1070 680z M130 1644 300 1724 450 1824 560 1904 640 1954 760 1974 960 1984 1090 1974 1240 1894 1395 1764 1395 2024 1330 2054 1230 2024 1100 2024 960 2074 760 2084 640 2174 450 2224 260 2264 380 2124 470 2054 520 1974 420 1884 300 1824 180 1764z M400 1564 500 1574 490 1684 560 1824 460 1744 380 1694z M440 1124 560 1124 560 1184 440 1184z M18 1974 60 2004 40 2084 18 2084z M640 1884 820 1874 830 1974 650 1964z M1330 1884 1395 1874 1395 2044 1340 2024z M880 1314 940 1324 990 1544 960 1544z M18 1164 300 1224 380 1304 300 1314 18 1234z M90 1424 160 1424 150 1474 90 1474z M800 2084 850 2084 850 2144 800 2144z" fill="#cdebb0"/><path d="M1150 1664 1230 1664 1240 1744 1160 1734z" fill="#c8f0d0"/><path d="M18 225 150 268 125 330 110 355 18 355z M18 362 100 362 110 400 70 460 18 460z M128 312 300 380 285 440 395 497 545 490 570 300 610 220 700 165 720 105 760 175 700 200 680 225 690 270 660 390 620 440 640 470 560 530 510 615 430 580 390 520 330 560 280 640 285 690 240 740 205 720 215 600 190 520 180 450 200 420 120 365z M470 318 522 318 522 345 565 345 565 372 460 375z M915 165 1040 140 1110 200 1045 212 1050 250 960 290 925 240z M1070 110 1110 95 1185 180 1125 190z M1110 395 1180 370 1260 440 1240 490 1170 490 1130 450z M1185 240 1260 250 1290 290 1240 320 1200 290z M1310 380 1395 370 1395 520 1330 540 1310 470z M1190 600 1330 590 1395 640 1395 760 1350 740 1260 730 1200 680z M350 1080 490 1040 520 1090 470 1130 380 1140z M1075 30 1150 25 1160 60 1090 70z M40 940 80 930 110 990 70 1010z M18 1564 110 1594 130 1664 100 1824 18 1864z M800 1644 1000 1664 1000 1724 1130 1824 1160 1904 1090 1974 970 1984 960 1884 870 1824 810 1724z M620 2004 720 1994 750 2124 660 2174 630 2074z M1240 1684 1395 1664 1395 1744 1250 1734z M880 1324 945 1329 940 1414 890 1414z M18 1124 120 1144 90 1204 18 1214z M90 2164 160 2134 170 2214 100 2224z M890 2164 960 2154 975 2204 900 2214z M510 1774 560 1779 560 1844 520 1834z" fill="#add19e"/><path d="M610 40 760 30 830 100 760 130 700 100 620 110z M1040 540 1100 540 1110 600 1050 610z M540 690 650 680 640 760 540 770z M1230 590 1300 590 1300 630 1230 630z M80 1284 280 1304 300 1424 200 1464 100 1454 80 1374z M330 1864 540 1824 560 1924 400 1954 340 1924z M720 1204 790 1204 800 1324 740 1324z M1100 2114 1180 2109 1180 2164 1110 2174z" fill="#e0dfdf"/><path d="M430 600 455 580 500 622 540 595 545 670 480 650 435 640z" fill="#bdbdbd"/><path d="M1240 1319 1300 1319 1300 1424 1240 1424z M1290 1424 1395 1414 1395 1544 1290 1544z" fill="#ebdbe8"/><path d="M815 315 900 300 880 335z M420 225 470 215 465 245z M380 1744 440 1764 430 1814 385 1794z M350 1859 410 1869 400 1899 345 1894z M1130 2114 1175 2114 1170 2154 1130 2154z M615 620 650 620 640 680 610 670z" fill="#f5dcba"/><path d="M600 150 625 140 645 165 615 185z" fill="#0fc896" opacity="0.7"/><path d="M18 1349 70 1359 100 1414 70 1474 18 1484z M362 520 390 520 400 590 372 590z M40 360 100 365 95 390 45 388z M800 25 845 25 850 60 805 55z M160 1814 190 1804 200 1854 170 1864z" fill="#aad3df"/><path d="M1140 18 C1147 35 1155 90 1180 120 C1205 150 1268 170 1290 200 C1312 230 1315 263 1310 300 C1305 337 1267 383 1260 420 C1253 457 1268 503 1270 520 M1030 100 C1035 113 1058 153 1060 180 C1062 207 1033 235 1040 260 C1047 285 1090 318 1100 330 M80 460 C97 473 155 513 180 540 C205 567 225 583 230 620 C235 657 207 730 210 760 C213 790 243 793 250 800 M1395 770 L1290 780 M1180 250 C1192 263 1248 313 1250 330 C1252 347 1200 347 1190 350 M1200 130 C1207 133 1235 138 1240 150 C1245 162 1232 192 1230 200 M1100 680 C1110 682 1148 683 1160 690 C1172 697 1168 715 1170 720 M690 690 L750 700 M840 745 C847 744 867 740 880 740 C893 740 913 744 920 745 M18 1604 C37 1614 83 1637 130 1664 C177 1691 250 1727 300 1764 C350 1801 390 1847 430 1884 C470 1921 505 1962 540 1984 C575 2006 603 2011 640 2014 C677 2017 707 2007 760 2004 C813 2001 903 1996 960 1994 C1017 1992 1060 1989 1100 1994 C1140 1999 1177 2002 1200 2024 C1223 2046 1237 2091 1240 2124 C1243 2157 1217 2201 1220 2224 C1223 2247 1253 2257 1260 2264 M18 2044 C40 2051 103 2071 150 2084 C197 2097 250 2124 300 2124 C350 2124 422 2074 450 2084 C478 2094 502 2161 470 2184 C438 2207 295 2217 260 2224 M760 2064 C800 2064 960 2054 1000 2064 C1040 2074 1000 2114 1000 2124 M800 2034 C855 2032 1073 2017 1130 2024 C1187 2031 1138 2066 1140 2074 M900 1924 L910 1994 M1110 1964 L1130 2044 M520 2084 L550 2174 M1140 1684 C1150 1691 1187 1707 1200 1724 C1213 1741 1217 1774 1220 1784 M990 900 C998 908 1038 935 1040 950 C1042 965 1007 983 1000 990 M1010 930 L1060 960" fill="none" stroke="#aad3df" stroke-width="5"/><path d="M470 220 L380 500 M570 180 L545 490 L490 610 M690 500 L690 560 L665 620 L820 660 M755 730 L760 800 M610 18 L612 80 M1085 240 L1110 290 M18 530 L80 560 L95 640 M18 1090 L90 1060 M500 1579 L600 1594 M480 1584 L500 1684 L450 1754 M570 1724 L660 1714 L700 1784 M180 1504 L180 1644 M800 1374 L1000 1554 M40 1664 L30 1824 M340 2074 L380 2184 M760 2114 L900 2104 L1100 2114 M1320 1904 L1395 1884 M640 180 L720 165 M900 90 L1000 95" fill="none" stroke="#b8924a" stroke-width="2" stroke-dasharray="10 7" opacity="0.85"/><path d="M370 1714 L455 1754 M480 1584 L495 1684 M1320 1904 L1320 2024 L1395 2054" fill="none" stroke="#a8862c" stroke-width="2" opacity="0.8"/><path d="M45 95 L55 235 M100 160 L105 245 M140 45 L150 255 M237 145 L243 250" fill="none" stroke="#b8b0c8" stroke-width="2" opacity="0.9"/><path d="M1395 130 L1280 170 L1230 160 M1310 390 L1395 380 M1310 470 L1395 460" fill="none" stroke="#f0a0a0" stroke-width="2" stroke-dasharray="5 5" opacity="0.8"/><path d="M18 605 L200 540 L185 430 L250 440 L430 650 L420 700 L260 795 L265 850 L410 890 L600 850 L640 880 L690 940 L640 1000 L620 1060 L640 1160 M18 1894 L60 1894 L60 1854 L120 1664 L350 1579 L470 1489 L640 1504 L690 1554 L660 1614 L700 1654 L800 1654 L810 1724 L870 1824 L960 1884 L970 1984 L1090 1974 L1240 1894 L1395 1764 M250 2264 L270 2204 L450 2124 L560 2054 L620 2004 L640 2164 L680 2264 M640 880 L760 1000 L890 960 L1000 1010 L1080 960 L1170 900" fill="none" stroke="#c79bd6" stroke-width="4" stroke-dasharray="14 7" opacity="0.9"/><path d="M18 355 C33 355 88 370 110 355 C132 340 123 286 150 268 C177 250 231 254 270 248 C309 242 337 246 385 235 C433 224 526 198 560 180 C594 162 577 143 590 130 C603 117 622 108 640 100 C658 92 690 88 700 85 M110 355 C125 362 168 379 200 400 C232 421 270 450 300 480 C330 510 355 547 380 580 C405 613 425 654 450 680 C475 706 498 720 530 735 C562 750 608 758 640 770 C672 782 687 795 720 805 C753 815 797 829 840 830 C883 831 932 817 980 810 C1028 803 1100 780 1130 790 C1160 800 1146 842 1160 870 C1174 898 1206 945 1215 960 M700 85 C710 99 733 139 760 170 C787 201 832 233 860 270 C888 307 907 358 930 390 C953 422 978 432 1000 460 C1022 488 1048 537 1060 560 C1072 583 1068 593 1070 600 M1070 600 C1087 598 1133 593 1170 590 C1207 587 1262 588 1290 580 C1318 572 1322 550 1340 540 C1358 530 1386 523 1395 520 M1070 600 C1068 613 1052 653 1060 680 C1068 707 1108 742 1120 760 C1132 778 1128 785 1130 790 M940 360 C952 350 982 312 1010 300 C1038 288 1078 268 1110 285 C1142 302 1173 368 1200 400 C1227 432 1255 450 1270 480 C1285 510 1287 563 1290 580 M18 660 C30 658 65 638 90 645 C115 652 142 678 170 700 C198 722 251 758 260 780 C269 802 232 802 225 830 C218 858 212 913 215 950 C218 987 242 1015 240 1050 C238 1085 207 1142 200 1160 M260 780 C275 775 305 758 350 750 C395 742 500 738 530 735 M215 950 C259 949 434 931 480 945 C526 959 515 1016 490 1035 C465 1054 372 1048 330 1060 C288 1072 255 1102 240 1110 M700 85 C690 81 653 71 640 60 C627 49 623 25 620 18 M700 85 C717 81 766 68 800 60 C834 52 888 43 905 40 M1310 990 L1395 975 M150 1274 C153 1291 158 1349 170 1374 C182 1399 187 1415 220 1424 C253 1433 345 1428 370 1429 M170 1374 L100 1384 M220 1424 C217 1431 227 1451 200 1464 C173 1477 90 1496 60 1504 C30 1512 25 1508 18 1509 M540 1934 C535 1926 520 1902 510 1884 C500 1866 492 1841 480 1824 C468 1807 447 1791 440 1784 M540 1934 C517 1932 450 1927 400 1924 C350 1921 293 1897 240 1914 C187 1931 113 1989 80 2024 C47 2059 43 2091 40 2124 C37 2157 57 2207 60 2224 M380 1864 L400 1924 M1395 1454 C1379 1459 1318 1467 1300 1484 C1282 1501 1292 1542 1290 1554 M1100 2184 C1110 2177 1137 2137 1160 2144 C1183 2151 1201 2219 1240 2224 C1279 2229 1369 2182 1395 2174 M540 1934 C553 1927 593 1909 620 1894 C647 1879 687 1852 700 1844" fill="none" stroke="#c4c0ba" stroke-width="11.5" stroke-linecap="round" stroke-linejoin="round"/><path d="M18 355 C33 355 88 370 110 355 C132 340 123 286 150 268 C177 250 231 254 270 248 C309 242 337 246 385 235 C433 224 526 198 560 180 C594 162 577 143 590 130 C603 117 622 108 640 100 C658 92 690 88 700 85 M110 355 C125 362 168 379 200 400 C232 421 270 450 300 480 C330 510 355 547 380 580 C405 613 425 654 450 680 C475 706 498 720 530 735 C562 750 608 758 640 770 C672 782 687 795 720 805 C753 815 797 829 840 830 C883 831 932 817 980 810 C1028 803 1100 780 1130 790 C1160 800 1146 842 1160 870 C1174 898 1206 945 1215 960 M700 85 C710 99 733 139 760 170 C787 201 832 233 860 270 C888 307 907 358 930 390 C953 422 978 432 1000 460 C1022 488 1048 537 1060 560 C1072 583 1068 593 1070 600 M1070 600 C1087 598 1133 593 1170 590 C1207 587 1262 588 1290 580 C1318 572 1322 550 1340 540 C1358 530 1386 523 1395 520 M1070 600 C1068 613 1052 653 1060 680 C1068 707 1108 742 1120 760 C1132 778 1128 785 1130 790 M940 360 C952 350 982 312 1010 300 C1038 288 1078 268 1110 285 C1142 302 1173 368 1200 400 C1227 432 1255 450 1270 480 C1285 510 1287 563 1290 580 M18 660 C30 658 65 638 90 645 C115 652 142 678 170 700 C198 722 251 758 260 780 C269 802 232 802 225 830 C218 858 212 913 215 950 C218 987 242 1015 240 1050 C238 1085 207 1142 200 1160 M260 780 C275 775 305 758 350 750 C395 742 500 738 530 735 M215 950 C259 949 434 931 480 945 C526 959 515 1016 490 1035 C465 1054 372 1048 330 1060 C288 1072 255 1102 240 1110 M700 85 C690 81 653 71 640 60 C627 49 623 25 620 18 M700 85 C717 81 766 68 800 60 C834 52 888 43 905 40 M1310 990 L1395 975 M150 1274 C153 1291 158 1349 170 1374 C182 1399 187 1415 220 1424 C253 1433 345 1428 370 1429 M170 1374 L100 1384 M220 1424 C217 1431 227 1451 200 1464 C173 1477 90 1496 60 1504 C30 1512 25 1508 18 1509 M540 1934 C535 1926 520 1902 510 1884 C500 1866 492 1841 480 1824 C468 1807 447 1791 440 1784 M540 1934 C517 1932 450 1927 400 1924 C350 1921 293 1897 240 1914 C187 1931 113 1989 80 2024 C47 2059 43 2091 40 2124 C37 2157 57 2207 60 2224 M380 1864 L400 1924 M1395 1454 C1379 1459 1318 1467 1300 1484 C1282 1501 1292 1542 1290 1554 M1100 2184 C1110 2177 1137 2137 1160 2144 C1183 2151 1201 2219 1240 2224 C1279 2229 1369 2182 1395 2174 M540 1934 C553 1927 593 1909 620 1894 C647 1879 687 1852 700 1844" fill="none" stroke="#ffffff" stroke-width="7.5" stroke-linecap="round" stroke-linejoin="round"/><path d="M95 770 L160 700 M490 600 L450 690 M560 640 L640 690 M110 1314 L150 1274 M430 1764 L400 1824" fill="none" stroke="#d0ccc6" stroke-width="6.5" stroke-linecap="round" stroke-linejoin="round"/><path d="M95 770 L160 700 M490 600 L450 690 M560 640 L640 690 M110 1314 L150 1274 M430 1764 L400 1824" fill="none" stroke="#ffffff" stroke-width="3.5" stroke-linecap="round" stroke-linejoin="round"/><path d="M18 1244 C40 1249 98 1262 150 1274 C202 1286 282 1304 330 1319 C378 1334 402 1352 440 1364 C478 1376 540 1389 560 1394 M900 1306 C917 1306 967 1313 1000 1309 C1033 1305 1058 1296 1100 1284 C1142 1272 1201 1253 1250 1234 C1299 1215 1371 1180 1395 1169 M1215 960 C1229 964 1279 973 1300 985 C1321 997 1332 1008 1340 1030 C1348 1052 1349 1097 1350 1120 C1351 1143 1346 1162 1345 1170" fill="none" stroke="#b8ba78" stroke-width="15" stroke-linecap="round" stroke-linejoin="round"/><path d="M18 1244 C40 1249 98 1262 150 1274 C202 1286 282 1304 330 1319 C378 1334 402 1352 440 1364 C478 1376 540 1389 560 1394 M900 1306 C917 1306 967 1313 1000 1309 C1033 1305 1058 1296 1100 1284 C1142 1272 1201 1253 1250 1234 C1299 1215 1371 1180 1395 1169 M1215 960 C1229 964 1279 973 1300 985 C1321 997 1332 1008 1340 1030 C1348 1052 1349 1097 1350 1120 C1351 1143 1346 1162 1345 1170" fill="none" stroke="#f6f9be" stroke-width="11" stroke-linecap="round" stroke-linejoin="round"/><path d="M560 1394 C583 1386 660 1357 700 1344 C740 1331 767 1320 800 1314 C833 1308 883 1307 900 1306" fill="none" stroke="#c8a060" stroke-width="15" stroke-linecap="round" stroke-linejoin="round"/><path d="M560 1394 C583 1386 660 1357 700 1344 C740 1331 767 1320 800 1314 C833 1308 883 1307 900 1306" fill="none" stroke="#f6cf9a" stroke-width="11" stroke-linecap="round" stroke-linejoin="round"/><path d="M150 2264 C168 2237 230 2144 260 2104 C290 2064 283 2052 330 2024 C377 1996 478 1964 540 1934 C602 1904 652 1872 700 1844 C748 1816 788 1786 830 1764 C872 1742 920 1727 950 1714 C980 1701 988 1694 1010 1684 C1032 1674 1057 1658 1080 1654 C1103 1650 1125 1669 1150 1659 C1175 1649 1189 1615 1230 1594 C1271 1573 1368 1544 1395 1534" fill="none" stroke="#c89858" stroke-width="16" stroke-linecap="round" stroke-linejoin="round"/><path d="M150 2264 C168 2237 230 2144 260 2104 C290 2064 283 2052 330 2024 C377 1996 478 1964 540 1934 C602 1904 652 1872 700 1844 C748 1816 788 1786 830 1764 C872 1742 920 1727 950 1714 C980 1701 988 1694 1010 1684 C1032 1674 1057 1658 1080 1654 C1103 1650 1125 1669 1150 1659 C1175 1649 1189 1615 1230 1594 C1271 1573 1368 1544 1395 1534" fill="none" stroke="#fbd5a2" stroke-width="12" stroke-linecap="round" stroke-linejoin="round"/><path d="M905 18 C905 45 899 136 905 180 C911 224 919 247 940 280 C961 313 1002 347 1030 380 C1058 413 1085 443 1110 480 C1135 517 1160 557 1180 600 C1200 643 1219 697 1230 740 C1241 783 1246 820 1245 860 C1244 900 1238 942 1225 980 C1212 1018 1182 1066 1170 1090 C1158 1114 1163 1102 1150 1124 C1137 1146 1110 1191 1090 1224 C1070 1257 1044 1287 1030 1324 C1016 1361 1010 1404 1005 1444 C1000 1484 999 1531 1000 1564 C1001 1597 1000 1617 1010 1644 C1020 1671 1040 1694 1060 1724 C1080 1754 1107 1791 1130 1824 C1153 1857 1180 1891 1200 1924 C1220 1957 1238 1991 1250 2024 C1262 2057 1271 2084 1275 2124 C1279 2164 1275 2241 1275 2264 M1010 1644 C1012 1652 1013 1681 1020 1694 C1027 1707 1045 1719 1050 1724 M1000 1564 C1007 1569 1027 1579 1040 1594 C1053 1609 1073 1644 1080 1654" fill="none" stroke="#d46882" stroke-width="26" stroke-linecap="round" stroke-linejoin="round"/><path d="M905 18 C905 45 899 136 905 180 C911 224 919 247 940 280 C961 313 1002 347 1030 380 C1058 413 1085 443 1110 480 C1135 517 1160 557 1180 600 C1200 643 1219 697 1230 740 C1241 783 1246 820 1245 860 C1244 900 1238 942 1225 980 C1212 1018 1182 1066 1170 1090 C1158 1114 1163 1102 1150 1124 C1137 1146 1110 1191 1090 1224 C1070 1257 1044 1287 1030 1324 C1016 1361 1010 1404 1005 1444 C1000 1484 999 1531 1000 1564 C1001 1597 1000 1617 1010 1644 C1020 1671 1040 1694 1060 1724 C1080 1754 1107 1791 1130 1824 C1153 1857 1180 1891 1200 1924 C1220 1957 1238 1991 1250 2024 C1262 2057 1271 2084 1275 2124 C1279 2164 1275 2241 1275 2264 M1010 1644 C1012 1652 1013 1681 1020 1694 C1027 1707 1045 1719 1050 1724 M1000 1564 C1007 1569 1027 1579 1040 1594 C1053 1609 1073 1644 1080 1654" fill="none" stroke="#e892a2" stroke-width="20" stroke-linecap="round" stroke-linejoin="round"/><path d="M18 1549 L300 1554 L470 1484 L640 1502 L760 1529 L1000 1564 L1395 1594 M350 1579 L370 1694 M220 1434 L300 1554 M1395 1404 L1380 1584" fill="none" stroke="#3a3af0" stroke-width="3" stroke-dasharray="3 9"/></g>
<path d="M157.7 83.5v-2.500m-1.800 0a1.800 2.600 0 1 1 3.600 0z" fill="none" stroke="#8ab880" stroke-width="0.700"/><path d="M127.4 98.7v-2.500m-1.800 0a1.800 2.600 0 1 1 3.600 0z" fill="none" stroke="#8ab880" stroke-width="0.700"/><path d="M153.6 116.6v-2.500m-1.800 0a1.800 2.600 0 1 1 3.600 0z" fill="none" stroke="#8ab880" stroke-width="0.700"/><path d="M131.5 135.9v-2.500m-1.800 0a1.800 2.600 0 1 1 3.600 0z" fill="none" stroke="#8ab880" stroke-width="0.700"/><path d="M44.6 101.4v-2.500m-1.800 0a1.800 2.600 0 1 1 3.600 0z" fill="none" stroke="#8ab880" stroke-width="0.700"/><path d="M66.7 186.9v-2.500m-1.800 0a1.800 2.600 0 1 1 3.600 0z" fill="none" stroke="#8ab880" stroke-width="0.700"/><path d="M309.4 15.9v-2.500m-1.800 0a1.800 2.600 0 1 1 3.600 0z" fill="none" stroke="#8ab880" stroke-width="0.700"/><path d="M254.3 44.9v-2.500m-1.800 0a1.800 2.600 0 1 1 3.600 0z" fill="none" stroke="#8ab880" stroke-width="0.700"/><path d="M314.9 102.8v-2.500m-1.800 0a1.800 2.600 0 1 1 3.600 0z" fill="none" stroke="#8ab880" stroke-width="0.700"/><path d="M353.6 185.6v-2.500m-1.800 0a1.800 2.600 0 1 1 3.600 0z" fill="none" stroke="#8ab880" stroke-width="0.700"/><path d="M99.8 138.7v-2.500m-1.800 0a1.800 2.600 0 1 1 3.600 0z" fill="none" stroke="#8ab880" stroke-width="0.700"/><path d="M11.5 487.3v-2.500m-1.800 0a1.800 2.600 0 1 1 3.600 0z" fill="none" stroke="#8ab880" stroke-width="0.700"/><path d="M19.8 462.5v-2.500m-1.800 0a1.800 2.600 0 1 1 3.600 0z" fill="none" stroke="#8ab880" stroke-width="0.700"/><path d="M229.4 456.9v-2.500m-1.800 0a1.800 2.600 0 1 1 3.600 0z" fill="none" stroke="#8ab880" stroke-width="0.700"/><path d="M265.3 490.0v-2.500m-1.800 0a1.800 2.600 0 1 1 3.600 0z" fill="none" stroke="#8ab880" stroke-width="0.700"/><path d="M257.0 527.3v-2.500m-1.800 0a1.800 2.600 0 1 1 3.600 0z" fill="none" stroke="#8ab880" stroke-width="0.700"/><path d="M186.7 583.8v-2.500m-1.800 0a1.800 2.600 0 1 1 3.600 0z" fill="none" stroke="#8ab880" stroke-width="0.700"/><path d="M284.6 516.2v-2.500m-1.800 0a1.800 2.600 0 1 1 3.600 0z" fill="none" stroke="#8ab880" stroke-width="0.700"/><path d="M248.8 367.3v-2.500m-1.800 0a1.800 2.600 0 1 1 3.600 0z" fill="none" stroke="#8ab880" stroke-width="0.700"/>
<path d="M172.8 408.7 L172.8 239.2 A169.5 169.5 0 0 1 306.9 305.0z" fill="#ff5a4a" fill-opacity="0.360" stroke="#ff2020" stroke-width="0.800"/><path d="M172.8 408.7 L251.6 248.5" stroke="#f01818" stroke-width="1"/><path d="M246.6 257.0 L251.6 248.5 L256.1 258.5" fill="#ff5a4a" fill-opacity="0.360" stroke="#ff2020" stroke-width="0.800"/>
<g style="font-family:&quot;DejaVu Sans&quot;,&quot;Liberation Sans&quot;,sans-serif"><text x="190.8" y="17.1" font-size="10" text-anchor="middle" fill="#222" textLength="30" lengthAdjust="spacingAndGlyphs" stroke="#fff" stroke-width="2" stroke-opacity="0.700" paint-order="stroke" stroke-linejoin="round">Tralau</text><text x="295.6" y="159.4" font-size="10" text-anchor="middle" fill="#222" textLength="46" lengthAdjust="spacingAndGlyphs" stroke="#fff" stroke-width="2" stroke-opacity="0.700" paint-order="stroke" stroke-linejoin="round">Nütschau</text><text x="207.4" y="348.3" font-size="10" text-anchor="middle" fill="#222" textLength="31" lengthAdjust="spacingAndGlyphs" stroke="#fff" stroke-width="2" stroke-opacity="0.700" paint-order="stroke" stroke-linejoin="round">Glinde</text><text x="266.4" y="350.8" font-size="10" text-anchor="middle" fill="#222" textLength="41" lengthAdjust="spacingAndGlyphs" stroke="#fff" stroke-width="2" stroke-opacity="0.700" paint-order="stroke" stroke-linejoin="round">Glinde II</text><text x="51.5" y="366.5" font-size="10" text-anchor="middle" fill="#222" textLength="36" lengthAdjust="spacingAndGlyphs" stroke="#fff" stroke-width="2" stroke-opacity="0.700" paint-order="stroke" stroke-linejoin="round">Grabau</text><text x="97.3" y="540.8" font-size="10" text-anchor="middle" fill="#222" textLength="29" lengthAdjust="spacingAndGlyphs" stroke="#fff" stroke-width="2" stroke-opacity="0.700" paint-order="stroke" stroke-linejoin="round">Neritz</text><text x="334.8" y="228.1" font-size="9" text-anchor="middle" fill="#8f1d2c" font-style="italic" textLength="89" lengthAdjust="spacingAndGlyphs" stroke="#fff" stroke-width="2" stroke-opacity="0.700" paint-order="stroke" stroke-linejoin="round">Bad Oldesloe - Nord</text><text x="334.8" y="241.0" font-size="10" text-anchor="middle" fill="#8f1d2c" font-style="italic" textLength="12" lengthAdjust="spacingAndGlyphs" stroke="#fff" stroke-width="2" stroke-opacity="0.700" paint-order="stroke" stroke-linejoin="round">16</text><text x="332.0" y="251.5" font-size="9" text-anchor="middle" fill="#8f1d2c" font-style="italic" textLength="89" lengthAdjust="spacingAndGlyphs" stroke="#fff" stroke-width="2" stroke-opacity="0.700" paint-order="stroke" stroke-linejoin="round">Bad Oldesloe - Nord</text><text x="332.0" y="264.5" font-size="10" text-anchor="middle" fill="#8f1d2c" font-style="italic" textLength="12" lengthAdjust="spacingAndGlyphs" stroke="#fff" stroke-width="2" stroke-opacity="0.700" paint-order="stroke" stroke-linejoin="round">16</text><text x="279.1" y="445.9" font-size="9" text-anchor="middle" fill="#8f1d2c" font-style="italic" textLength="85" lengthAdjust="spacingAndGlyphs" stroke="#fff" stroke-width="2" stroke-opacity="0.700" paint-order="stroke" stroke-linejoin="round">Bad Oldesloe - Süd</text><text x="279.6" y="458.9" font-size="10" text-anchor="middle" fill="#8f1d2c" font-style="italic" textLength="18" lengthAdjust="spacingAndGlyphs" stroke="#fff" stroke-width="2" stroke-opacity="0.700" paint-order="stroke" stroke-linejoin="round">17a</text><text x="346.9" y="590.2" font-size="9" text-anchor="middle" fill="#8f1d2c" font-style="italic" textLength="35" lengthAdjust="spacingAndGlyphs" stroke="#fff" stroke-width="2" stroke-opacity="0.700" paint-order="stroke" stroke-linejoin="round">Rümpel</text><text x="346.7" y="602.9" font-size="10" text-anchor="middle" fill="#8f1d2c" font-style="italic" textLength="19" lengthAdjust="spacingAndGlyphs" stroke="#fff" stroke-width="2" stroke-opacity="0.700" paint-order="stroke" stroke-linejoin="round">17b</text><text x="228.9" y="546.1" font-size="10" text-anchor="middle" fill="#6a9bd4" font-style="italic" textLength="61" lengthAdjust="spacingAndGlyphs" stroke="#fff" stroke-width="2" stroke-opacity="0.700" paint-order="stroke" stroke-linejoin="round">Norderbeste</text><text x="61.2" y="478.8" font-size="10" text-anchor="middle" fill="#6a9bd4" font-style="italic" textLength="62" lengthAdjust="spacingAndGlyphs" transform="rotate(36 61.2 478.8)" stroke="#fff" stroke-width="2" stroke-opacity="0.700" paint-order="stroke" stroke-linejoin="round">Norderbeste</text><text x="177.0" y="374.0" font-size="8" text-anchor="middle" fill="#222" textLength="52" lengthAdjust="spacingAndGlyphs" transform="rotate(-17 177.0 374.0)" stroke="#fff" stroke-width="2" stroke-opacity="0.700" paint-order="stroke" stroke-linejoin="round">Rosenstraße</text><text x="245.2" y="478.8" font-size="8" text-anchor="middle" fill="#222" textLength="47" lengthAdjust="spacingAndGlyphs" transform="rotate(-25 245.2 478.8)" stroke="#fff" stroke-width="2" stroke-opacity="0.700" paint-order="stroke" stroke-linejoin="round">Blumendorf</text><text x="108.6" y="553.8" font-size="8" text-anchor="middle" fill="#222" textLength="56" lengthAdjust="spacingAndGlyphs" transform="rotate(-23 108.6 553.8)" stroke="#fff" stroke-width="2" stroke-opacity="0.700" paint-order="stroke" stroke-linejoin="round">Bundesstraße</text><text x="383.2" y="262.5" font-size="10" text-anchor="middle" fill="#222" textLength="9" lengthAdjust="spacingAndGlyphs" stroke="#fff" stroke-width="2" stroke-opacity="0.700" paint-order="stroke" stroke-linejoin="round">W</text><rect x="69.5" y="57.2" width="32" height="13" rx="2" fill="#f4f4f2" stroke="#b8b8b8" stroke-width="0.800"/><text x="85.5" y="67.0" font-size="9" text-anchor="middle" fill="#333" textLength="23" lengthAdjust="spacingAndGlyphs">K 64</text><rect x="-7.199999999999999" y="80.9" width="32" height="13" rx="2" fill="#f4f4f2" stroke="#b8b8b8" stroke-width="0.800"/><text x="8.8" y="90.7" font-size="9" text-anchor="middle" fill="#333" textLength="23" lengthAdjust="spacingAndGlyphs">K 64</text><rect x="62.599999999999994" y="129.2" width="32" height="13" rx="2" fill="#f4f4f2" stroke="#b8b8b8" stroke-width="0.800"/><text x="78.6" y="139.0" font-size="9" text-anchor="middle" fill="#333" textLength="23" lengthAdjust="spacingAndGlyphs">K 66</text><rect x="110.6" y="184.9" width="32" height="13" rx="2" fill="#f4f4f2" stroke="#b8b8b8" stroke-width="0.800"/><text x="126.6" y="194.70000000000002" font-size="9" text-anchor="middle" fill="#333" textLength="23" lengthAdjust="spacingAndGlyphs">K 66</text><rect x="194.4" y="211.6" width="32" height="13" rx="2" fill="#f4f4f2" stroke="#b8b8b8" stroke-width="0.800"/><text x="210.4" y="221.4" font-size="9" text-anchor="middle" fill="#333" textLength="23" lengthAdjust="spacingAndGlyphs">K 66</text><rect x="266.7" y="96.9" width="32" height="13" rx="2" fill="#f4d4dc" stroke="#d890a0" stroke-width="0.800"/><text x="282.7" y="106.7" font-size="9" text-anchor="middle" fill="#6a1a2a" textLength="23" lengthAdjust="spacingAndGlyphs">A 21</text><rect x="295.6" y="500.9" width="32" height="13" rx="2" fill="#f4d4dc" stroke="#d890a0" stroke-width="0.800"/><text x="311.6" y="510.7" font-size="9" text-anchor="middle" fill="#6a1a2a" textLength="23" lengthAdjust="spacingAndGlyphs">A 21</text><rect x="113.9" y="367.7" width="37" height="13" rx="2" fill="#eef0d0" stroke="#b4b88a" stroke-width="0.800"/><text x="132.4" y="377.5" font-size="9" text-anchor="middle" fill="#444" textLength="28" lengthAdjust="spacingAndGlyphs">L 226</text><rect x="347.5" y="304.3" width="37" height="13" rx="2" fill="#eef0d0" stroke="#b4b88a" stroke-width="0.800"/><text x="366.0" y="314.1" font-size="9" text-anchor="middle" fill="#444" textLength="28" lengthAdjust="spacingAndGlyphs">L 226</text><rect x="179.5" y="498.7" width="32" height="13" rx="2" fill="#f6e6c8" stroke="#c8a878" stroke-width="0.800"/><text x="195.5" y="508.5" font-size="9" text-anchor="middle" fill="#444" textLength="23" lengthAdjust="spacingAndGlyphs">B 75</text><rect x="20.4" y="609.6" width="32" height="13" rx="2" fill="#f6e6c8" stroke="#c8a878" stroke-width="0.800"/><text x="36.4" y="619.4" font-size="9" text-anchor="middle" fill="#444" textLength="23" lengthAdjust="spacingAndGlyphs">B 75</text></g>
<path d="M172.8 408.7 C168.8 398.7 161.3 391.7 161.3 382.2 A11.500 11.500 0 0 1 184.3 382.2 C184.3 391.7 176.8 398.7 172.8 408.7z" fill="#f4504a" stroke="#c02828" stroke-width="1"/><path d="M163.8 378.7 A9.500 9.500 0 0 1 181.8 378.7" fill="none" stroke="#ff8a80" stroke-width="1.500" opacity="0.700"/><circle cx="172.3" cy="382.2" r="3.700" fill="#000"/>
<path d="M5 612l5-6 2 1-1 3 2 2-4 3z" fill="#666"/>
</svg>
<div style="left:416px;top:920px;width:1089px;height:6px;background:#3a3a3a"></div>
<div style="left:416px;top:926px;width:1089px;height:33px;background:#2b2b2b"></div>
<svg style="left:423px;top:932px" width="21" height="21" viewBox="-10.500 -10.500 21 21"><circle r="9.800" fill="#d9d9d9" stroke="#8a8a8a" stroke-width="1.200"/><circle r="7.800" fill="#efefef"/><path d="M4 -6l-2.500 7.500-3-3z" fill="#555"/><path d="M-4 6l2.500-7.500 3 3z" fill="#aaa"/></svg>
<svg style="left:460px;top:933px" width="14" height="19" viewBox="0 0 14 19"><path d="M7 0v19M1.500 10h11" stroke="#4f7fd0" stroke-width="1.400"/></svg>
<svg style="left:489px;top:934px" width="24" height="18" viewBox="0 0 24 18"><path d="M1 1h19v14h-19zM1 5.500h19M1 10h19M7.300 1v14M13.600 1v14" fill="none" stroke="#c8c8c8" stroke-width="1.600"/><path d="M16 13.500h7l-3.500 4z" fill="#ddd"/></svg>
<svg style="left:522px;top:935px" width="23" height="17" viewBox="0 0 23 17"><rect x="16" y="2" width="4.500" height="14" rx="1" fill="#a8a8a0"/><rect x="0.500" y="4.500" width="17" height="3.600" fill="#e8e8e8"/><path d="M3 4.500l2 3.600M8 4.500l2 3.600M13 4.500l2 3.600" stroke="#888" stroke-width="1.400"/></svg>
<svg style="left:554px;top:932px" width="24" height="21" viewBox="0 0 24 21"><path d="M1 2q11-3.500 22 0l-8 9h-6z" fill="#cfcfcf"/><path d="M5 14.500q7-7 14 0q-7 7-14 0z" fill="#f4f4f4"/><circle cx="12" cy="14.500" r="3.400" fill="#2aa6b8"/><circle cx="12" cy="14.500" r="1.500" fill="#123"/></svg>
<svg style="left:588px;top:932px" width="23" height="21" viewBox="0 0 23 21"><path d="M3 6l3-3 3 4 1-5 3 1 1 5 3-3 2 2-3 6 2 2-1 4-5 2-7-3z" fill="#f3c9a5"/><path d="M5 8l3 5M9 7l2 5M13 7l1 5" stroke="#c99770" stroke-width="1.100" fill="none"/></svg>
<svg style="left:621px;top:933px" width="24" height="20" viewBox="0 0 24 20"><path d="M1 1q11 4 22 0v13q-11-4-22 0z" fill="#57a7dc"/><path d="M1 1q11 4 22 0v2.500q-11 4-22 0z" fill="#d0dde6"/><path d="M4 7h5v2h3v-2h6v3h-14z" fill="#e9f2f8"/><path d="M14 14h8l-4 5z" fill="#d8d8d8"/></svg>
<div style="left:665px;top:929px;width:1px;height:27px;background:#e8e8e8"></div>
<svg style="left:683px;top:930px" width="26" height="26" viewBox="-13 -13 26 26"><g fill="none" stroke="#a8a8a8" stroke-width="2"><circle r="8.200"/><circle r="3"/><path d="M0 -12.500v6M0 6.500v6M-12.500 0h6M6.500 0h6"/></g></svg>
<div class="btn" style="left:722px;top:932px;width:38px;height:21px;"></div>
<div class="btn" style="left:768px;top:932px;width:38px;height:21px;"></div>
<svg style="left:732px;top:934px" width="26" height="18" viewBox="0 0 26 18"><rect x="1" y="1" width="15" height="15" fill="#3c6fc0" stroke="#e8e8e8" stroke-width="1.600"/><path d="M16 1l-15 15h15z" fill="#6a93d8" opacity="0.700"/><path d="M19 12.500h5l-2.500 3z" fill="#ddd"/></svg>
<svg style="left:778px;top:934px" width="26" height="18" viewBox="0 0 26 18"><rect x="1" y="1" width="15" height="15" fill="#e2441c" stroke="#e8e8e8" stroke-width="1.600"/><path d="M16 1l-15 15h15z" fill="#a83a28" opacity="0.800"/><path d="M19 12.500h5l-2.500 3z" fill="#ddd"/></svg>
<div style="left:954px;top:970px;width:2px;height:1px;background:#999"></div>
<div style="left:957px;top:970px;width:2px;height:1px;background:#999"></div>
<div style="left:960px;top:970px;width:2px;height:1px;background:#999"></div>
<div style="left:963px;top:970px;width:2px;height:1px;background:#999"></div>
<div style="left:966px;top:970px;width:2px;height:1px;background:#999"></div>
<div style="left:969px;top:970px;width:2px;height:1px;background:#999"></div>
<svg style="left:7px;top:980px" width="28" height="30" viewBox="1190 48 290 285"><g><path d="M1292 58Q1352 75 1414 55V115Q1352 98 1292 118z" fill="#fff"/><path d="M1300 68Q1352 82 1406 65V90Q1352 100 1300 92z" fill="#58b2ec"/><path d="M1300 90Q1352 100 1406 88V106Q1352 92 1300 108z" fill="#86c83c"/></g>
<g><path d="M1196 122Q1256 139 1318 119V179Q1256 162 1196 182z" fill="#fff"/><path d="M1204 132Q1256 146 1310 129V154Q1256 164 1204 156z" fill="#58b2ec"/><path d="M1204 154Q1256 164 1310 152V170Q1256 156 1204 172z" fill="#f4d63c"/></g>
<g><path d="M1352 178Q1412 195 1474 175V235Q1412 218 1352 238z" fill="#fff"/><path d="M1360 188Q1412 202 1466 185V210Q1412 220 1360 212z" fill="#58b2ec"/><path d="M1360 210Q1412 220 1466 208V226Q1412 212 1360 228z" fill="#86c83c"/></g>
<g><path d="M1232 268Q1292 285 1354 265V325Q1292 308 1232 328z" fill="#fff"/><path d="M1240 278Q1292 292 1346 275V300Q1292 310 1240 302z" fill="#58b2ec"/><path d="M1240 300Q1292 310 1346 298V316Q1292 302 1240 318z" fill="#f4d63c"/></g>
<path d="M1250 160L1280 280M1290 300L1380 245M1375 130L1405 205" stroke="#e8581c" stroke-width="13" stroke-linecap="round"/>
</svg>
<span class="t" id="t54" style="left:42px;top:988.19px;font-size:11px;line-height:16px;color:#fff;letter-spacing:-0.014px;">Tour Betrachter</span>
<svg style="left:156px;top:986px" width="24" height="18" viewBox="0 0 24 18"><circle cx="7" cy="3.500" r="2.800" fill="#c99a3c"/><path d="M5.500 5h3l0.800 6h-4.600z" fill="#b8862c"/><rect x="1" y="11" width="12" height="3.500" rx="1" fill="#6a6a9a"/><rect x="0.500" y="14.500" width="13" height="2" fill="#4a4a7a"/><path d="M16 6h5l-2.500 3z" fill="#ddd"/></svg>
<span class="t" id="t55" style="left:208px;top:988.19px;font-size:11px;line-height:16px;color:#fff;letter-spacing:0.077px;">Filter:</span>
<div class="btn" style="left:247px;top:984px;width:22px;height:21px;"></div>
<svg style="left:250px;top:986px" width="18" height="17" viewBox="0 0 18 17"><path d="M2 3l4-1 9 8-4 5-9-8z" fill="#f0b43c"/><path d="M6 2l9 8-1.500 1.800-9-8z" fill="#f8d070"/><circle cx="4.500" cy="4.500" r="1.200" fill="#7a3a10"/><path d="M3 1q-2 1-1 3" stroke="#c04020" fill="none"/><path d="M12 13h4l-2 2.500z" fill="#ddd"/></svg>
<div class="fld" style="left:277px;top:984px;width:116px;height:20px;"></div>
<div style="left:373px;top:984px;width:20px;height:20px;background:#3c3c3c;border-left:1px solid #2b2b2b;border-radius:0 2px 2px 0"></div>
<svg style="left:379px;top:993.0px" width="8" height="5" viewBox="0 0 8 5"><path d="M0 0h8l-4 4z" fill="#ddd"/></svg>
<svg style="left:1683px;top:989px" width="17" height="12" viewBox="0 0 26 18" preserveAspectRatio="none"><rect width="26" height="18" fill="#f4f4f4"/><rect x="1.500" y="1.500" width="23" height="15" fill="#5fb4ea"/><path d="M1.500 13l6-8 5 6 12-3v8.500h-23z" fill="#7cc04a"/><path d="M1.500 13l6-8 3 3.500-4 8h-5z" fill="#c8ccd0"/><rect x="1.500" y="14.500" width="23" height="2" fill="#3a78c0"/><circle cx="20" cy="5" r="2.400" fill="#f6dc3c"/></svg>
<svg style="left:1828px;top:986px" width="26" height="18" viewBox="0 0 26 18" preserveAspectRatio="none"><rect width="26" height="18" fill="#f4f4f4"/><rect x="1.500" y="1.500" width="23" height="15" fill="#5fb4ea"/><path d="M1.500 13l6-8 5 6 12-3v8.500h-23z" fill="#7cc04a"/><path d="M1.500 13l6-8 3 3.500-4 8h-5z" fill="#c8ccd0"/><rect x="1.500" y="14.500" width="23" height="2" fill="#3a78c0"/><circle cx="20" cy="5" r="2.400" fill="#f6dc3c"/></svg>
<div style="left:1706px;top:992.5px;width:116px;height:3px;background:#2c2c2c;border-radius:2px;height:3px"></div>
<div style="left:1706px;top:992.5px;width:40px;height:3px;background:#5e9cf0;border-radius:2px;height:3px"></div>
<div style="left:1740.5px;top:988.0px;width:11px;height:12px;background:linear-gradient(#5a5a5a,#474747);border:1px solid #2a2a2a;border-radius:2.500px"></div>
<svg style="left:1882px;top:987px" width="35" height="16" viewBox="0 0 35 16">
<circle cx="8" cy="8" r="7.2" fill="#fff"/><circle cx="27" cy="8" r="7.2" fill="#fff"/>
<path d="M4.8 7.2h4.6v3.8H4.8z M6.8 7v-1.8h4.6v3.8H9.6" fill="none" stroke="#222" stroke-width="1.2"/>
<path d="M24 5l6 6M30 5l-6 6" stroke="#111" stroke-width="2.2" stroke-linecap="round"/></svg>
<div style="left:0px;top:1016px;width:1920px;height:116px;border-top:1px solid #2a2a2a;border-bottom:1px solid #2a2a2a;background:#353535"></div>
<div style="left:7px;top:1023px;width:1906px;height:88px;background:#666"></div>
<div style="left:7px;top:1023px;width:119px;height:88px;background:#c6c6c6"></div>
<div style="left:16px;top:1036px;width:102px;height:51px;background:#5a4a3a"></div>
<span class="t" id="t56" style="left:12px;top:1095.19px;font-size:11px;line-height:16px;color:#fff;letter-spacing:-0.092px;">Feld an Grabauer alt...</span>
<div style="left:7px;top:1111px;width:1906px;height:14px;background:#3b3b3b;border:1px solid #2a2a2a"></div>
<div style="left:21px;top:1112px;width:1878px;height:12px;background:#3f3f3f;border:1px solid #2c2c2c;border-radius:2px"></div>
<svg style="left:10px;top:1114px" width="8" height="9" viewBox="0 0 8 9"><path d="M6 0.500v8l-5-4z" fill="#ddd"/></svg>
<svg style="left:1903px;top:1114px" width="8" height="9" viewBox="0 0 8 9"><path d="M2 0.500v8l5-4z" fill="#ddd"/></svg>
<span class="t" id="t57" style="left:1680px;top:1138.84px;font-size:12px;line-height:16px;color:#fff;letter-spacing:-0.249px;">Lizenz Pro, 1 Benutzer: Harald Bendschneider</span>
<svg style="left:416px;top:117px" width="1089" height="803" viewBox="0 0 1089 803">
<defs>
<linearGradient id="mSkyH" x1="0" y1="0" x2="1" y2="0"><stop offset="0" stop-color="#cfe4ec"/><stop offset="0.250" stop-color="#dcebee"/><stop offset="0.500" stop-color="#eef2ea"/><stop offset="0.700" stop-color="#f6f3e8"/><stop offset="0.880" stop-color="#f1eae2"/><stop offset="1" stop-color="#dcd6d8"/></linearGradient>
<linearGradient id="mSkyV" x1="0" y1="0" x2="0" y2="1"><stop offset="0" stop-color="#fff" stop-opacity="0"/><stop offset="0.550" stop-color="#fbf1e4" stop-opacity="0.350"/><stop offset="1" stop-color="#f3ddd0" stop-opacity="0.850"/></linearGradient>
<linearGradient id="mField" x1="0" y1="0" x2="0" y2="1"><stop offset="0" stop-color="#58412a"/><stop offset="0.200" stop-color="#60472c"/><stop offset="0.450" stop-color="#64482c"/><stop offset="1" stop-color="#503826"/></linearGradient>
<linearGradient id="mGnd" x1="0" y1="0" x2="0" y2="1"><stop offset="0" stop-color="#6e4e32"/><stop offset="0.250" stop-color="#58402a"/><stop offset="0.500" stop-color="#4c3826"/><stop offset="1" stop-color="#443222"/></linearGradient>
<linearGradient id="mJk" gradientUnits="userSpaceOnUse" x1="0" y1="0" x2="1147" y2="0"><stop offset="0" stop-color="#363948"/><stop offset="0.450" stop-color="#3b3d4c"/><stop offset="0.700" stop-color="#2e3140"/><stop offset="1" stop-color="#282b3a"/></linearGradient>
<linearGradient id="mJk2" gradientUnits="userSpaceOnUse" x1="0" y1="0" x2="1020" y2="0"><stop offset="0" stop-color="#363948"/><stop offset="0.450" stop-color="#3b3d4c"/><stop offset="0.700" stop-color="#2e3140"/><stop offset="1" stop-color="#282b3a"/></linearGradient>
<linearGradient id="mFace" x1="0" y1="0" x2="1" y2="0.300"><stop offset="0" stop-color="#b47c54"/><stop offset="0.500" stop-color="#a87050"/><stop offset="1" stop-color="#7c4e36"/></linearGradient>
<filter id="mb07" x="-5%" y="-5%" width="110%" height="110%"><feGaussianBlur stdDeviation="0.800"/></filter>
<filter id="mb1" x="-10%" y="-10%" width="120%" height="120%"><feGaussianBlur stdDeviation="1.200"/></filter>
<filter id="mb3" x="-20%" y="-20%" width="140%" height="140%"><feGaussianBlur stdDeviation="3"/></filter>
<filter id="mb8" x="-30%" y="-30%" width="160%" height="160%"><feGaussianBlur stdDeviation="8"/></filter>
<filter id="mb20" x="-40%" y="-40%" width="180%" height="180%"><feGaussianBlur stdDeviation="20"/></filter>
<filter id="mLeafL" x="0" y="0" width="100%" height="100%"><feTurbulence type="fractalNoise" baseFrequency="0.075 0.110" numOctaves="3" seed="5"/><feColorMatrix type="matrix" values="0 0 0 0 0.600  0 0 0 0 0.420  0 0 0 0 0.260  3.400 0 0 0 -1.600"/></filter>
<filter id="mLeafD" x="0" y="0" width="100%" height="100%"><feTurbulence type="fractalNoise" baseFrequency="0.060 0.090" numOctaves="3" seed="21"/><feColorMatrix type="matrix" values="0 0 0 0 0.100  0 0 0 0 0.070  0 0 0 0 0.050  0 3.600 0 0 -1.600"/></filter>
<filter id="mStub" x="0" y="0" width="100%" height="100%"><feTurbulence type="fractalNoise" baseFrequency="0.200 0.450" numOctaves="2" seed="9"/><feColorMatrix type="matrix" values="0 0 0 0 0.820  0 0 0 0 0.600  0 0 0 0 0.360  2.800 0 0 0 -1.250"/></filter>
<filter id="mStubD" x="0" y="0" width="100%" height="100%"><feTurbulence type="fractalNoise" baseFrequency="0.160 0.400" numOctaves="2" seed="17"/><feColorMatrix type="matrix" values="0 0 0 0 0.200  0 0 0 0 0.130  0 0 0 0 0.080  0 2.800 0 0 -1.200"/></filter>
<filter id="mTree" x="0" y="0" width="100%" height="100%"><feTurbulence type="fractalNoise" baseFrequency="0.120" numOctaves="3" seed="4" result="n"/><feColorMatrix in="n" type="matrix" values="0 0 0 0 0  0 0 0 0 0  0 0 0 0 0  0 0 0 7 -3.100" result="m"/><feComposite in="SourceGraphic" in2="m" operator="in"/></filter>
<linearGradient id="mGm" x1="0" y1="0" x2="0" y2="1"><stop offset="0" stop-color="#000"/><stop offset="0.140" stop-color="#fff"/><stop offset="1" stop-color="#fff"/></linearGradient><mask id="mGmask" maskUnits="userSpaceOnUse" x="0" y="380" width="1089" height="423"><rect x="0" y="380" width="1089" height="423" fill="url(#mGm)"/></mask>
</defs>
<!-- sky -->
<rect width="1089" height="160" fill="url(#mSkyH)"/><rect width="1089" height="160" fill="url(#mSkyV)"/>
<path d="M120 30q200-20 420 10" stroke="#fff" stroke-width="10" opacity="0.350" fill="none" filter="url(#mb8)"/>
<path d="M60 70q160-30 380-14" stroke="#fff" stroke-width="8" opacity="0.300" fill="none" filter="url(#mb8)"/>
<ellipse cx="1010" cy="6" rx="120" ry="14" fill="#c9c4cc" opacity="0.600" filter="url(#mb8)"/>
<!-- field -->
<rect y="148" width="1089" height="660" fill="url(#mField)"/>
<!-- lit band -->
<path d="M0 149H1089V172Q980 170 900 163L636 164 0 166z" fill="#c29862"/>
<path d="M900 150h189v34q-90-6-140-18z" fill="#b88c54"/>
<path d="M975 150q60 12 114 30v-14q-40-10-70-16z" fill="#8a6a44" opacity="0.800" filter="url(#mb3)"/>
<path d="M0 164L640 163 900 162 1089 176v8L900 170 0 173z" fill="#8a6840" opacity="0.700" filter="url(#mb3)"/>
<!-- warm mid/low right field -->
<path d="M860 300q120-40 229-30v300l-180-10q-60-120-49-260z" fill="#8c6036" opacity="0.420" filter="url(#mb20)"/>
<path d="M700 200q200-20 389 10v90q-200-30-389-10z" fill="#8a6640" opacity="0.450" filter="url(#mb20)"/>
<!-- tractor-track shadows converging near (885,168) -->
<g fill="#5e4228" opacity="0.550" filter="url(#mb3)"><path d="M884 172l-50 190h30z"/><path d="M890 172l10 210h34z"/><path d="M900 172l120 170h40z"/><path d="M875 172l-140 150h44z"/><path d="M910 170l179 110v24z"/></g>
<rect y="190" width="1089" height="420" filter="url(#mStub)" opacity="0.160"/>
<rect y="170" width="1089" height="440" filter="url(#mStubD)" opacity="0.500"/>
<linearGradient id="mMm" x1="0" y1="0" x2="0" y2="1"><stop offset="0" stop-color="#000"/><stop offset="0.450" stop-color="#fff"/><stop offset="1" stop-color="#fff"/></linearGradient><mask id="mMmask" maskUnits="userSpaceOnUse" x="0" y="185" width="1089" height="260"><rect x="0" y="185" width="1089" height="260" fill="url(#mMm)"/></mask>
<filter id="mMidD" x="0" y="0" width="100%" height="100%"><feTurbulence type="fractalNoise" baseFrequency="0.090 0.160" numOctaves="3" seed="33"/><feColorMatrix type="matrix" values="0 0 0 0 0.200  0 0 0 0 0.130  0 0 0 0 0.080  0 3.200 0 0 -1.350"/></filter>
<filter id="mMidL" x="0" y="0" width="100%" height="100%"><feTurbulence type="fractalNoise" baseFrequency="0.110 0.200" numOctaves="3" seed="44"/><feColorMatrix type="matrix" values="0 0 0 0 0.780  0 0 0 0 0.480  0 0 0 0 0.240  3.200 0 0 0 -1.650"/></filter>
<g mask="url(#mMmask)"><rect y="185" width="1089" height="260" filter="url(#mMidD)" opacity="0.800"/><rect y="185" width="1089" height="260" filter="url(#mMidL)" opacity="0.280"/></g>
<!-- leafy ground lower part -->
<g mask="url(#mGmask)"><rect y="380" width="1089" height="423" fill="url(#mGnd)"/>
<path d="M880 500q120-30 209-20v150q-120 20-209-30z" fill="#55503a" opacity="0.450" filter="url(#mb20)"/>
<path d="M1020 660q40-10 69 0v100h-69z" fill="#55503a" opacity="0.400" filter="url(#mb20)"/>
<rect y="380" width="1089" height="423" filter="url(#mLeafL)" opacity="0.300"/><rect y="380" width="1089" height="423" filter="url(#mLeafD)" opacity="0.800"/></g>

<!-- far treelines -->
<g transform="translate(634 83) scale(0.310400)">
<g fill="#c49a68"><ellipse cx="30" cy="208" rx="22" ry="13"/><ellipse cx="72" cy="206" rx="16" ry="12"/><ellipse cx="118" cy="200" rx="20" ry="18"/><ellipse cx="156" cy="192" rx="22" ry="24"/><ellipse cx="196" cy="204" rx="18" ry="14"/><ellipse cx="228" cy="210" rx="14" ry="9"/></g>
<g fill="#a87a44" opacity="0.800"><ellipse cx="40" cy="214" rx="26" ry="8"/><ellipse cx="120" cy="212" rx="30" ry="9"/><ellipse cx="160" cy="208" rx="18" ry="12"/><ellipse cx="215" cy="214" rx="20" ry="7"/></g>
<path d="M8 222v-8q110-6 230 2v6z" fill="#a87840" opacity="0.800"/>
<path d="M668 210L690 198 720 202 760 182 800 190 840 174 880 182 920 166 960 174 1000 160 1040 168 1090 154 1140 162 1190 150 1240 158 1290 148 1340 158 1390 150 1440 156 1482 152V212H668z" fill="#545434"/>
<path d="M700 200l20-10 16 8 20-14 18 8 22-12 20 8 24-14 22 10 26-12 24 8 28-14 26 10 30-12 28 8 30-12 30 10 30-10 32 8 30-8 26 6v40H700z" fill="#6a6238" opacity="0.700"/>
<path d="M668 212q300-12 814-8v8H668z" fill="#a8703a"/><path d="M900 204q300-14 582-10v12q-300-4-582 6z" fill="#8a5e30" opacity="0.700"/>
<!-- wind turbine -->
<path d="M1180 165l2-70h5l3 70z" fill="#f4f4f0"/><path d="M1184 96l-10-78 6-2 10 78z" fill="#fafafa"/><path d="M1184 92l82 10-1 7-83-9z" fill="#fafafa"/><path d="M1186 98l-54 56-5-4 52-58z" fill="#f2f2f2"/>
<rect x="1171" y="36" width="8" height="6" fill="#d8584c" transform="rotate(-8 1175 39)"/><rect x="1240" y="98" width="8" height="7" fill="#d8584c"/><rect x="1140" y="136" width="8" height="7" fill="#d8584c" transform="rotate(-45 1144 139)"/>
</g>
<!-- left orange tree (mostly hidden behind dialog) -->
<path d="M0 150h30v653H0z" fill="#62503a"/><path d="M0 430h30v373H0z" fill="#48362a"/><path d="M0 400h30v60H0z" fill="#54422f" opacity="0.700"/>
<path d="M0 16L12 19 24 26 37 35 49 45 65 48 74 58 92 86 110 120V175H0z" fill="#98641f"/>
<g filter="url(#mTree)"><path d="M0 16L12 19 24 26 37 35 49 45 65 48 74 58 92 86 110 120V175H0z" fill="#c8923e"/></g>
<g filter="url(#mTree)" transform="translate(3 5)"><path d="M0 30L30 40 60 60 92 96V175H0z" fill="#6a4216"/></g>
<path d="M0 150h30v30H0z" fill="#5a4026" opacity="0.800"/>
<rect x="0" y="430" width="22" height="373" filter="url(#mLeafL)" opacity="0.250"/>
<rect y="780" width="640" height="23" fill="#4a3828"/><rect y="780" width="640" height="23" filter="url(#mLeafL)" opacity="0.500"/><rect y="780" width="640" height="23" filter="url(#mLeafD)" opacity="0.700"/>
<!-- ================= person ================= -->
<g filter="url(#mb07)"><g transform="translate(634 83) scale(0.310400)">
<!-- jacket upper -->
<path d="M265 470L160 620 60 720 0 830V1160H1150L1130 1110 990 1040 960 930 880 760 780 600 640 520z" fill="url(#mJk)"/>
<path d="M640 520L780 600 880 760 960 930 990 1040 1130 1110 1150 1160H820L760 900 700 640z" fill="#2a2d3c" opacity="0.850"/>
<path d="M0 830L60 720 130 700 110 1000 0 1060z" fill="#34384a" opacity="0.900"/>
<!-- collar -->
<path d="M265 470L215 560 205 700 250 745 400 765 470 820 640 690 700 640 640 520 565 420z" fill="#2e3232"/>
<!-- scarf -->
<path d="M300 520L580 430 590 560 530 700 470 810 400 745 320 630z" fill="#5e606c"/><path d="M400 600q60 10 110-40l-30 140-40 90-50-60z" fill="#4c4e5a"/>
<path d="M310 560q20 40 60 90M350 540q20 50 50 90" stroke="#8a8c9a" stroke-width="10" opacity="0.500" fill="none"/>
<!-- straps -->
<path d="M160 640L215 595 200 760 185 1000 130 985 140 780z" fill="#222428"/><path d="M640 520L700 560 760 720 790 900 740 880 700 720z" fill="#24262a"/>
<rect x="160" y="628" width="52" height="14" fill="#b02430" transform="rotate(-8 186 635)"/><rect x="636" y="532" width="36" height="12" fill="#b02430" transform="rotate(25 654 538)"/>
<!-- zipper -->
<path d="M255 742l120 16 70 60 50-70 140-56" stroke="#8a8870" stroke-width="7" fill="none" stroke-dasharray="5 4"/><path d="M448 800l10 70" stroke="#bdb9a8" stroke-width="12"/>
<circle cx="338" cy="985" r="15" fill="#6a7688"/><circle cx="192" cy="1000" r="12" fill="#5a6678"/>
<path d="M620 960q80-10 150 20l-10 60q-70-30-140-20z" fill="#282b3a" opacity="0.800"/>
<!-- face -->
<path d="M262 330Q250 420 285 490 330 570 400 585 470 580 520 520 560 440 548 330 400 250 262 330z" fill="url(#mFace)"/>
<path d="M470 300q80 40 78 110-10 80-60 140 30-100-18-250z" fill="#7a4e34" opacity="0.550" filter="url(#mb3)"/>
<path d="M350 330q-10 50 10 80 30 14 50-6-20-30-20-70z" fill="#96603e" opacity="0.700"/>
<path d="M335 440q50 8 105-6" stroke="#8a5440" stroke-width="6" fill="none" opacity="0.800"/>
<circle cx="312" cy="346" r="44" fill="#d8a070" fill-opacity="0.250" stroke="#5a4438" stroke-width="7"/><circle cx="448" cy="326" r="44" fill="#d8a070" fill-opacity="0.250" stroke="#5a4438" stroke-width="7"/><path d="M356 338q24-14 48-6M268 340l-26 0M492 318l30-10" stroke="#5a4438" stroke-width="6" fill="none"/>
<!-- hat -->
<path d="M222 330Q218 220 290 140 390 70 480 118 556 190 566 300 568 350 545 382 540 300 500 275 400 240 300 285 250 320 250 425 222 390 222 330z" fill="#4e5264"/>
<g fill="none" stroke="#7e1a2a" stroke-width="20"><path d="M300 152q90-50 176-18"/><path d="M248 225q140-90 284-20"/><path d="M232 300q30-50 100-70M470 230q60 20 88 70"/></g>
<path d="M262 184q130-80 250-24" fill="none" stroke="#3c4050" stroke-width="14"/><path d="M236 262q150-90 310-14" fill="none" stroke="#5c6074" stroke-width="12"/>
<!-- left hand + phone -->
<path d="M20 1010q60-30 150 10 60 30 70 70-10 50-60 70H30z" fill="#96603e"/><path d="M0 990l170 60 20 30-30 6L0 1030z" fill="#1c1c20"/><path d="M0 994l160 54" stroke="#9a9aa0" stroke-width="3"/>
<!-- right hand -->
<path d="M1040 1130q60-30 130-16l60 46H1030z" fill="#8a5638"/>
</g>
<g transform="translate(634 403) scale(0.349000)">
<!-- jacket lower body -->
<path d="M0 0H700L735 380 720 580 640 745 440 795 300 785 170 720 130 600 105 380 110 230 0 220z" fill="url(#mJk2)"/>
<path d="M500 0h200l35 380-15 200-80 165-140 35q60-300 0-780z" fill="#282b3a" opacity="0.700"/>
<path d="M105 380q100 60 230 10l-10 120q-110 40-200-10z" fill="#262a38" opacity="0.900"/><path d="M540 370q100 50 190 0l-10 110q-90 40-170 0z" fill="#262a38" opacity="0.900"/>
<path d="M430 480l20 310" stroke="#1c2030" stroke-width="14"/>
<circle cx="442" cy="352" r="15" fill="#6a7888"/><circle cx="290" cy="438" r="14" fill="#5c6a7c"/><circle cx="568" cy="436" r="13" fill="#4c5a6c"/><circle cx="392" cy="322" r="6" fill="#c89030"/>
<!-- left sleeve + hand + phone -->
<path d="M0 0h240l-30 100-70 90L0 230z" fill="#2a3046"/><path d="M30 30q90-30 180 10 10 50-40 80-60 30-120 0z" fill="#905c3c"/><path d="M40 0l150 40-10 20L30 20z" fill="#18181c"/>
<path d="M140 170l10 90" stroke="#c02830" stroke-width="9"/>
<path d="M690 40l10 110" stroke="#c02830" stroke-width="10"/><path d="M575 90l20 30" stroke="#a89070" stroke-width="8"/>
<!-- right arm -->
<path d="M700 0h60l110 30 140 40-50 145-110-15-145-40z" fill="#2a2e40"/>
<!-- right hand + drone -->
<path d="M930 100q40-30 100-20l180 60-10 70-120 30-120-30q-40-50-30-110z" fill="#7a4a30"/>
<path d="M1020 130l180-80 40 90-150 110z" fill="#6c6e5c"/><path d="M1040 150l150-60 20 50-130 80z" fill="#4a4c40"/>
<path d="M1030 130L1318 0v30L1050 160z" fill="#5c5e50"/><path d="M800 300l215-95 12 26-215 95z" fill="#7c7e6a"/><rect x="780" y="282" width="50" height="34" rx="6" fill="#2c2c2c" transform="rotate(-20 805 299)"/><rect x="792" y="298" width="34" height="14" fill="#b0b0a8" transform="rotate(-20 805 299)"/>
<path d="M1090 170l60 90 20-10-55-90z" fill="#6a6c5c"/>
<path d="M880 200l130-60" stroke="#2a2a2a" stroke-width="5"/>
<!-- trousers -->
<path d="M170 722L355 790 345 1150H175z" fill="#283036"/><path d="M415 795L640 745 600 1150H420z" fill="#262e34"/>
<path d="M200 800q40 100 20 340M470 820q40 120 10 320" stroke="#2e363c" stroke-width="16" fill="none" opacity="0.700"/>
</g>
</g>
<!-- crosshair dotted lines -->
<path d="M543.500 0V803" stroke="#111" stroke-width="1" stroke-dasharray="1 1"/>
<path d="M636 401.500H816" stroke="#c8c8c8" stroke-width="1" stroke-dasharray="1 1" opacity="0.800"/>
<path d="M543.500 792V803" stroke="#eee" stroke-width="1" stroke-dasharray="1 1"/>
</svg>
<svg style="left:340px;top:100px" width="240" height="101" viewBox="0 0 1920 808" opacity="0.900">
<path d="M818 470Q1150 620 1495 465V808H818z" fill="#5aa6d2"/><path d="M818 470Q900 505 985 522V808H818z" fill="#4a90ba"/><path d="M1325 520Q1410 500 1495 465V808H1325z" fill="#7cc8f0"/>
<path d="M818 470Q1150 620 1495 465V510Q1150 665 818 520z" fill="#d4d8dc"/><path d="M1325 520Q1410 500 1495 465V510Q1410 545 1325 566z" fill="#f2f2f2"/>
<path d="M1495 465l30 22V808h-30z" fill="#bcc2c6"/>
<path d="M830 808V660l30-50 30 30v-20h30v50l20 20v-30h40v60l30 10v-40h50v50l40-10 100-60 90 50v-70h40v90l20 10v-100h40l20-20 30 30V808z" fill="#3a7698" opacity="0.900"/>
<path d="M1190 712l130 96H1190z" fill="#ececec"/><path d="M1190 712l130 96" stroke="#777" stroke-width="6"/>
</svg>
<div style="left:436px;top:200px;width:617px;height:710px;background:#f0f0f0;border:1px solid #6f6f6f;box-shadow:0 3px 14px rgba(0,0,0,0.450)"></div>
<div style="left:437px;top:201px;width:615px;height:25px;background:#fff"></div>
<svg style="left:439px;top:204px" width="18" height="18" viewBox="-9 -9 18 18"><defs><radialGradient id="sph" cx="0.400" cy="0.350" r="0.700"><stop offset="0" stop-color="#e8f0ff"/><stop offset="0.300" stop-color="#6a8cf0"/><stop offset="1" stop-color="#1a3ad8"/></radialGradient></defs><circle r="8" fill="url(#sph)"/></svg>
<span class="t" id="t58" style="left:462px;top:204.84px;font-size:12px;line-height:16px;color:#999;letter-spacing:-0.054px;">Pano Exif Editor - Mit dem Mavic Pro auf Radtour.jpg</span>
<svg style="left:925px;top:202px" width="120" height="23" viewBox="0 0 120 23" fill="none"><path d="M8 11.500h10" stroke="#777"/><path d="M53.500 6.500h9v9h-9z" stroke="#ddd"/><path d="M99 6l10 10M109 6l-10 10" stroke="#666" stroke-width="1.100"/></svg>
<div style="left:445px;top:234px;width:599px;height:299px;background:#fff;border-top:2px solid #6e6e6e;border-left:2px solid #6e6e6e;border-right:1px solid #fff;border-bottom:1px solid #fff"></div>
<div style="left:447px;top:236px;width:596px;height:296px;background:#5a4a3a"></div>
<div style="left:445px;top:546px;width:471px;height:355px;background:#fff;border-top:2px solid #6e6e6e;border-left:2px solid #6e6e6e;border-right:1px solid #fff;border-bottom:1px solid #fff"></div>
<div style="left:447px;top:548px;width:450px;height:21px;background:#f3f3f3;border-bottom:1px solid #8a8a8a;border-right:1px solid #8a8a8a"></div>
<div style="left:696px;top:548px;width:1px;height:352px;background:#c4c4c4"></div>
<div style="left:696px;top:548px;width:1px;height:21px;background:#8a8a8a"></div>
<div style="left:897px;top:548px;width:1px;height:352px;background:#c4c4c4"></div>
<div style="left:447px;top:590px;width:450px;height:1px;background:#c4c4c4"></div>
<div style="left:447px;top:612px;width:450px;height:1px;background:#c4c4c4"></div>
<div style="left:447px;top:634px;width:450px;height:1px;background:#c4c4c4"></div>
<div style="left:447px;top:656px;width:450px;height:1px;background:#c4c4c4"></div>
<div style="left:447px;top:678px;width:450px;height:1px;background:#c4c4c4"></div>
<div style="left:447px;top:700px;width:450px;height:1px;background:#c4c4c4"></div>
<div style="left:447px;top:722px;width:450px;height:1px;background:#c4c4c4"></div>
<div style="left:447px;top:744px;width:450px;height:1px;background:#c4c4c4"></div>
<div style="left:447px;top:766px;width:450px;height:1px;background:#c4c4c4"></div>
<div style="left:447px;top:788px;width:450px;height:1px;background:#c4c4c4"></div>
<div style="left:447px;top:810px;width:450px;height:1px;background:#c4c4c4"></div>
<div style="left:447px;top:832px;width:450px;height:1px;background:#c4c4c4"></div>
<div style="left:447px;top:854px;width:450px;height:1px;background:#c4c4c4"></div>
<div style="left:447px;top:876px;width:450px;height:1px;background:#c4c4c4"></div>
<div style="left:447px;top:898px;width:450px;height:1px;background:#c4c4c4"></div>
<span class="t" id="t59" style="left:450px;top:550.84px;font-size:12px;line-height:16px;color:#111;letter-spacing:-0.144px;">Tag</span>
<span class="t" id="t60" style="left:700px;top:550.84px;font-size:12px;line-height:16px;color:#111;letter-spacing:-0.403px;">Value</span>
<span class="t" id="t61" style="left:450px;top:572.84px;font-size:12px;line-height:16px;color:#111;letter-spacing:-0.152px;">xmp:GPSLongitude</span>
<span class="t" id="t62" style="left:700px;top:572.84px;font-size:12px;line-height:16px;color:#111;letter-spacing:-0.686px;">10.297408</span>
<span class="t" id="t63" style="left:450px;top:594.84px;font-size:12px;line-height:16px;color:#111;letter-spacing:0.012px;">xmp:ProjectionType</span>
<span class="t" id="t64" style="left:700px;top:594.84px;font-size:12px;line-height:16px;color:#111;letter-spacing:0.039px;">equirectangular</span>
<span class="t" id="t65" style="left:450px;top:616.84px;font-size:12px;line-height:16px;color:#111;letter-spacing:-0.180px;">xmp:CroppedAreaLeftPixels</span>
<span class="t" id="t66" style="left:700px;top:616.84px;font-size:12px;line-height:16px;color:#111;">0</span>
<span class="t" id="t67" style="left:450px;top:638.84px;font-size:12px;line-height:16px;color:#111;letter-spacing:-0.160px;">xmp:CroppedAreaTopPixels</span>
<span class="t" id="t68" style="left:700px;top:638.84px;font-size:12px;line-height:16px;color:#111;">0</span>
<span class="t" id="t69" style="left:450px;top:660.84px;font-size:12px;line-height:16px;color:#111;letter-spacing:-0.102px;">xmp:CroppedAreaImageWidthPixels</span>
<span class="t" id="t70" style="left:700px;top:660.84px;font-size:12px;line-height:16px;color:#111;letter-spacing:-0.772px;">16384</span>
<span class="t" id="t71" style="left:450px;top:682.84px;font-size:12px;line-height:16px;color:#111;letter-spacing:-0.100px;">xmp:CroppedAreaImageHeightPixels</span>
<span class="t" id="t72" style="left:700px;top:682.84px;font-size:12px;line-height:16px;color:#111;letter-spacing:-0.887px;">8192</span>
<span class="t" id="t73" style="left:450px;top:704.84px;font-size:12px;line-height:16px;color:#111;letter-spacing:-0.114px;">xmp:FullPanoWidthPixels</span>
<span class="t" id="t74" style="left:700px;top:704.84px;font-size:12px;line-height:16px;color:#111;letter-spacing:-0.772px;">16384</span>
<span class="t" id="t75" style="left:450px;top:726.84px;font-size:12px;line-height:16px;color:#111;letter-spacing:-0.109px;">xmp:FullPanoHeightPixels</span>
<span class="t" id="t76" style="left:700px;top:726.84px;font-size:12px;line-height:16px;color:#111;letter-spacing:-0.887px;">8192</span>
<span class="t" id="t77" style="left:450px;top:748.84px;font-size:12px;line-height:16px;color:#111;letter-spacing:-0.070px;">exif:DateTimeOriginal</span>
<span class="t" id="t78" style="left:700px;top:748.84px;font-size:12px;line-height:16px;color:#111;letter-spacing:-0.552px;">2018:11:08 14:46:48</span>
<span class="t" id="t79" style="left:450px;top:770.84px;font-size:12px;line-height:16px;color:#111;letter-spacing:-0.092px;">exif:ImageDescription</span>
<span class="t" id="t80" style="left:700px;top:770.84px;font-size:12px;line-height:16px;color:#111;letter-spacing:-0.295px;">Feld an Grabauer alter Bahntrasse</span>
<span class="t" id="t81" style="left:450px;top:792.84px;font-size:12px;line-height:16px;color:#111;letter-spacing:-0.327px;">exif:GPSLatitude</span>
<span class="t" id="t82" style="left:700px;top:792.84px;font-size:12px;line-height:16px;color:#111;letter-spacing:-0.686px;">53.797926</span>
<span class="t" id="t83" style="left:450px;top:814.84px;font-size:12px;line-height:16px;color:#111;letter-spacing:-0.259px;">exif:GPSLongitude</span>
<span class="t" id="t84" style="left:700px;top:814.84px;font-size:12px;line-height:16px;color:#111;letter-spacing:-0.686px;">10.297408</span>
<span class="t" id="t85" style="left:450px;top:836.84px;font-size:12px;line-height:16px;color:#111;letter-spacing:-0.396px;">exif:GPSLatitudeRef</span>
<span class="t" id="t86" style="left:700px;top:836.84px;font-size:12px;line-height:16px;color:#111;letter-spacing:-0.686px;">53.797926</span>
<span class="t" id="t87" style="left:450px;top:858.84px;font-size:12px;line-height:16px;color:#111;letter-spacing:-0.321px;">exif:GPSLongitudeRef</span>
<span class="t" id="t88" style="left:700px;top:858.84px;font-size:12px;line-height:16px;color:#111;letter-spacing:-0.686px;">10.297408</span>
<span class="t" id="t89" style="left:450px;top:880.84px;font-size:12px;line-height:16px;color:#111;letter-spacing:-0.231px;">exif:GPSImgDirection</span>
<span class="t" id="t90" style="left:700px;top:880.84px;font-size:12px;line-height:16px;color:#111;">0</span>
<div style="left:898px;top:548px;width:17px;height:352px;background:#f0f0f0"></div>
<div style="left:899.5px;top:611px;width:14.5px;height:242px;background:#cdcdcd;width:14.500px"></div>
<svg style="left:901px;top:553px" width="11" height="8" viewBox="0 0 11 8"><path d="M1.500 6l4-4 4 4" fill="none" stroke="#606060" stroke-width="1.800"/></svg>
<svg style="left:901px;top:887px" width="11" height="8" viewBox="0 0 11 8"><path d="M1.500 2l4 4 4-4" fill="none" stroke="#606060" stroke-width="1.800"/></svg>
<div style="left:931px;top:546px;width:112px;height:24px;background:#f0f0f0;border-top:1px solid #fff;border-left:1px solid #fff;border-right:1px solid #646464;border-bottom:1px solid #646464;box-shadow:inset -1px -1px 0 #a0a0a0"></div>
<span class="t" id="t91" style="left:944px;top:549.84px;font-size:12px;line-height:16px;color:#111;letter-spacing:-0.106px;">Select image file</span>
<div style="left:931px;top:875px;width:112px;height:24px;background:#f0f0f0;border-top:1px solid #fff;border-left:1px solid #fff;border-right:1px solid #646464;border-bottom:1px solid #646464;box-shadow:inset -1px -1px 0 #a0a0a0"></div>
<span class="t" id="t92" style="left:960px;top:877.84px;font-size:12px;line-height:16px;color:#111;letter-spacing:-0.084px;">Write tags</span>
<svg style="left:930px;top:604px" width="14" height="14" viewBox="-7 -7 14 14"><circle r="5.500" fill="#fff"/><path d="M-4 4a5.600 5.600 0 0 1 8-8" fill="none" stroke="#7a7a7a" stroke-width="1.300"/><path d="M4 -4a5.600 5.600 0 0 1 -8 8" fill="none" stroke="#e0e0e0" stroke-width="1.300"/><circle r="2" fill="#111"/></svg>
<svg style="left:930px;top:644px" width="14" height="14" viewBox="-7 -7 14 14"><circle r="5.500" fill="#fff"/><path d="M-4 4a5.600 5.600 0 0 1 8-8" fill="none" stroke="#7a7a7a" stroke-width="1.300"/><path d="M4 -4a5.600 5.600 0 0 1 -8 8" fill="none" stroke="#e0e0e0" stroke-width="1.300"/></svg>
<span class="t" id="t93" style="left:949.4px;top:602.84px;font-size:12px;line-height:16px;color:#f4101a;letter-spacing:0.146px;">North</span>
<span class="t" id="t94" style="left:949.4px;top:642.84px;font-size:12px;line-height:16px;color:#1e9a2e;letter-spacing:0.012px;">Initial view</span>
<svg style="left:931px;top:685px" width="13" height="13" viewBox="0 0 13 13"><rect width="13" height="13" fill="#fff"/><path d="M0.500 12.500v-12h12" fill="none" stroke="#6e6e6e" stroke-width="1.800"/><path d="M3 6.200l2.400 2.600 4.600-5.400" fill="none" stroke="#111" stroke-width="1.900"/></svg>
<svg style="left:931px;top:725px" width="13" height="13" viewBox="0 0 13 13"><rect width="13" height="13" fill="#fff"/><path d="M0.500 12.500v-12h12" fill="none" stroke="#6e6e6e" stroke-width="1.800"/><path d="M3 6.200l2.400 2.600 4.600-5.400" fill="none" stroke="#111" stroke-width="1.900"/></svg>
<span class="t" id="t95" style="left:949.4px;top:682.84px;font-size:12px;line-height:16px;color:#111;letter-spacing:-0.164px;">Stay on top</span>
<span class="t" id="t96" style="left:949.4px;top:722.84px;font-size:12px;line-height:16px;color:#111;letter-spacing:-0.107px;">Load image</span>
<svg style="left:447px;top:236px" width="596" height="296" viewBox="0 0 596 296" preserveAspectRatio="none">
<defs>
<linearGradient id="pasky" x1="0" y1="0" x2="0" y2="1"><stop offset="0" stop-color="#7c8bb0"/><stop offset="0.350" stop-color="#8c9fc8"/><stop offset="0.700" stop-color="#a9c0e2"/><stop offset="0.930" stop-color="#c9d8ea"/><stop offset="1" stop-color="#e6e0d6"/></linearGradient>
<radialGradient id="pasun" cx="0.500" cy="0.500" r="0.500"><stop offset="0" stop-color="#fff" stop-opacity="1"/><stop offset="0.120" stop-color="#fff6e0" stop-opacity="0.950"/><stop offset="0.350" stop-color="#f4ead8" stop-opacity="0.600"/><stop offset="1" stop-color="#e8e4e0" stop-opacity="0"/></radialGradient>
<linearGradient id="pagnd" x1="0" y1="0" x2="0" y2="1"><stop offset="0" stop-color="#34281a"/><stop offset="0.100" stop-color="#443220"/><stop offset="0.400" stop-color="#3e3022"/><stop offset="0.650" stop-color="#362e20"/><stop offset="0.900" stop-color="#2a2218"/><stop offset="1" stop-color="#18140e"/></linearGradient>
<filter id="pab2" x="-20%" y="-20%" width="140%" height="140%"><feGaussianBlur stdDeviation="2"/></filter>
<filter id="pab5" x="-30%" y="-30%" width="160%" height="160%"><feGaussianBlur stdDeviation="5"/></filter>
<filter id="pab10" x="-30%" y="-30%" width="160%" height="160%"><feGaussianBlur stdDeviation="10"/></filter>
<filter id="paspk" x="0" y="0" width="100%" height="100%"><feTurbulence type="fractalNoise" baseFrequency="0.600" numOctaves="2" seed="7" result="n"/><feColorMatrix in="n" type="matrix" values="0 0 0 0 0  0 0 0 0 0  0 0 0 0 0  0 0 0 9 -4.750" result="m"/><feComposite in="SourceGraphic" in2="m" operator="in"/></filter>
<filter id="paspkD" x="0" y="0" width="100%" height="100%"><feTurbulence type="fractalNoise" baseFrequency="0.500" numOctaves="2" seed="13" result="n"/><feColorMatrix in="n" type="matrix" values="0 0 0 0 0  0 0 0 0 0  0 0 0 0 0  0 0 0 9 -3.600" result="m"/><feComposite in="SourceGraphic" in2="m" operator="in"/></filter>
<filter id="palf" x="-5%" y="-5%" width="110%" height="110%"><feTurbulence type="fractalNoise" baseFrequency="0.300" numOctaves="2" seed="2" result="n"/><feColorMatrix in="n" type="matrix" values="0 0 0 0 0.150  0 0 0 0 0.130  0 0 0 0 0.050  0 0 0 5 -2.300" result="d"/><feGaussianBlur in="SourceGraphic" stdDeviation="1" result="b"/><feComposite in="d" in2="b" operator="in" result="dd"/><feMerge><feMergeNode in="b"/><feMergeNode in="dd"/></feMerge></filter>
<filter id="patex" x="0" y="0" width="100%" height="100%"><feTurbulence type="fractalNoise" baseFrequency="0.220 0.350" numOctaves="3" seed="3" result="n"/><feColorMatrix in="n" type="matrix" values="0 0 0 0 0.450  0 0 0 0 0.300  0 0 0 0 0.150  2.600 0 0 0 -1.050"/></filter>
<filter id="patex2" x="0" y="0" width="100%" height="100%"><feTurbulence type="fractalNoise" baseFrequency="0.180 0.300" numOctaves="3" seed="11" result="n"/><feColorMatrix in="n" type="matrix" values="0 0 0 0 0.050  0 0 0 0 0.040  0 0 0 0 0.020  0 2.800 0 0 -1.150"/></filter>
</defs>
<rect width="596" height="150" fill="url(#pasky)"/>
<!-- sky brightening lower right / cirrus -->
<ellipse cx="430" cy="150" rx="200" ry="42" fill="#dfe8f2" opacity="0.550" filter="url(#pab10)"/>
<ellipse cx="180" cy="140" rx="90" ry="60" fill="#e4ecf6" opacity="0.800" filter="url(#pab10)"/>
<path d="M300 95q80-40 200-30" stroke="#c4d2ea" stroke-width="6" fill="none" opacity="0.500" filter="url(#pab5)"/>
<path d="M190 60q40 20 90 70" stroke="#b4c6e4" stroke-width="7" fill="none" opacity="0.500" filter="url(#pab5)"/>
<path d="M330 40q90-20 220 10" stroke="#a4b4d6" stroke-width="5" fill="none" opacity="0.450" filter="url(#pab5)"/>
<!-- clouds -->
<g filter="url(#pab2)"><ellipse cx="453" cy="86" rx="21" ry="5.500" fill="#f1e9e2"/><ellipse cx="466" cy="88" rx="9" ry="5" fill="#f6efe8"/>
<path d="M388 131q10-8 30-7q8-8 30-5q18 0 28 5q-8 10-40 10q-30 4-48-3z" fill="#e9dfd6"/><path d="M388 132q40 5 88-6q-10 10-44 10q-30 2-44-4z" fill="#8f96ae"/></g>
<!-- sun glow -->
<circle cx="81" cy="142" r="80" fill="url(#pasun)"/><ellipse cx="135" cy="124" rx="50" ry="36" fill="#fbfcff" opacity="0.950" filter="url(#pab10)"/><ellipse cx="110" cy="138" rx="60" ry="14" fill="#fff" opacity="0.900" filter="url(#pab5)"/><ellipse cx="60" cy="128" rx="40" ry="26" fill="#f4efe8" opacity="0.700" filter="url(#pab10)"/>
<!-- ground -->
<rect y="148" width="596" height="148" fill="url(#pagnd)"/>
<path d="M300 148h160v7q-80 3-160 1z" fill="#8a6a42" opacity="0.800"/>
<path d="M0 150h296v4q-150 2-296 0z" fill="#46502a" opacity="0.700"/>
<path d="M0 215q150-14 300 0v60h-300z" fill="#3a3c26" opacity="0.550" filter="url(#pab5)"/>
<path d="M300 232q150-12 296 0v40h-296z" fill="#3a3424" opacity="0.500" filter="url(#pab5)"/>
<rect y="150" width="596" height="146" filter="url(#patex)" opacity="0.200"/>
<rect y="150" width="596" height="146" filter="url(#patex2)" opacity="0.600"/>
<path d="M0 296v-9q150-7 300-4q120-7 296 3v10z" fill="#181510" opacity="0.850" filter="url(#pab2)"/>
<!-- left trees: orange leafy -->
<g filter="url(#paspkD)"><path d="M0 36q20-14 42-6q18 10 14 40q6 30-2 80h-54z" fill="#8e5a22"/><path d="M0 80q14-4 30 8q6 30 0 62h-30z" fill="#b4782c"/><path d="M0 110q20-4 50 6v34h-50z" fill="#6a3e1c"/></g>
<!-- bare trees crowns -->
<g filter="url(#paspk)" opacity="0.950"><path d="M44 50q30-34 70-22q34-10 52 22q14 26 8 60q0 30-10 40h-120q-10-60 0-100z" fill="#2e1e38"/></g>
<g filter="url(#paspkD)" opacity="0.900"><path d="M44 112q8-14 20-10 10-12 24-6 12-10 26-2 14-8 26 2 12-4 22 8 10 4 8 20 4 14-2 26h-124q-6-20 0-38z" fill="#2a1820"/></g>
<g stroke="#1c1014" fill="none" stroke-linecap="round"><path d="M56 150v-70M62 150q-2-40 4-90M73 150v-60M82 150q-1-50-6-96M90 150q0-50 6-98M100 150q1-40-2-80M108 150q0-56 8-100M118 150q0-40 4-84M128 150q0-40-3-76M138 150q1-30 6-66M148 150q0-30-4-60" stroke-width="1.500"/><path d="M20 150v-50M30 150v-62M38 150v-40M10 150v-40" stroke-width="1.300" stroke="#2a1a14"/></g>
<ellipse cx="142" cy="134" rx="22" ry="18" fill="#5a5a26" filter="url(#pab2)"/><ellipse cx="150" cy="140" rx="14" ry="11" fill="#3e3a1c" filter="url(#pab2)"/>
<circle cx="81" cy="142" r="9" fill="#fff" filter="url(#pab2)"/><circle cx="81" cy="142" r="14" fill="#ffd9a0" opacity="0.550" filter="url(#pab5)"/>
<ellipse cx="82" cy="160" rx="30" ry="10" fill="#7a3030" opacity="0.350" filter="url(#pab5)"/>
<!-- leafy tree group 2 -->
<g filter="url(#palf)"><path d="M172 150q-4-30 6-48q10-16 24-18q14-6 28 0q16 6 14 26q12 10 12 40z" fill="#6e6424"/><path d="M190 96q16-14 36-8q10 8 6 24q-20 8-42-2z" fill="#94842c"/><path d="M176 150q0-24 10-30q30 8 66 2q6 14 4 28z" fill="#3c3a1a"/></g>
<path d="M196 150v-30M206 150v-34M218 150v-28M230 150v-26M240 150v-22" stroke="#241c10" stroke-width="1.400"/>
<g filter="url(#pab2)"><ellipse cx="270" cy="138" rx="13" ry="12" fill="#6a6428"/><ellipse cx="290" cy="144" rx="9" ry="6" fill="#7a6a2c"/></g>
<!-- right trees -->
<g filter="url(#palf)"><path d="M452 150q10-10 20-20q0-30 20-44q14-10 28-6q10-8 18 0q8 10 4 30q4 20 0 40z" fill="#7e6e2a"/><path d="M476 100q16-22 40-18q14 4 10 22q-20 14-50-4z" fill="#a08a34"/><path d="M456 150q8-14 30-18q30 4 56 0v18z" fill="#463e1c"/></g>
<g filter="url(#paspkD)" opacity="0.900"><path d="M534 92q20-12 46 0q10 20 6 58h-58q-4-36 6-58z" fill="#46342e"/><path d="M568 44q14-14 28-10v116h-22q-12-60-6-106z" fill="#7a4420"/></g><g filter="url(#paspk)"><path d="M528 84q24-16 56-2v30h-60z" fill="#4a3a34"/><path d="M560 34q18-16 36-10v40h-38z" fill="#8a4c22"/></g>
<path d="M500 150v-40M512 150v-44M524 150v-36M540 150v-50M552 150v-46M562 150v-40M574 150v-70M584 150v-80" stroke="#2a2018" stroke-width="1.300"/>
<rect x="580" y="139" width="16" height="3" fill="#4a3020"/><path d="M582 142v8M594 142v8" stroke="#3a2418" stroke-width="1.400"/>
<path d="M296 147h70l10-1h30l46 2v2h-156z" fill="#6a5a38" opacity="0.700"/>
<!-- yellow landing pad -->
<ellipse cx="247.400" cy="244.400" rx="25.400" ry="11.800" fill="#c7a026"/><path d="M243 241.500l9 6M252 241.500l-9 6" stroke="#e8503a" stroke-width="1.800"/>
<g fill="#e8503a"><circle cx="224" cy="247" r="1"/><circle cx="231" cy="252.500" r="1"/><circle cx="247" cy="256" r="1"/><circle cx="263" cy="252.500" r="1"/><circle cx="271" cy="247" r="1"/><circle cx="263" cy="236" r="1"/><circle cx="231" cy="236" r="1"/></g>
<!-- tiny person -->
<g><ellipse cx="367.500" cy="146.500" rx="4.500" ry="4" fill="#5a3038"/><ellipse cx="367.500" cy="150.500" rx="3.600" ry="3.600" fill="#a87858"/>
<path d="M360 158q7.500-6 15 0l3 14 6 4-1 3-7-2 1 26q-9 4-17 0l1-24-6 2v-6z" fill="#3c4868"/><path d="M364 205h6v18h-6zM372 205h6v18h-6z" fill="#262a34"/><circle cx="357" cy="176" r="2" fill="#b88a68"/><path d="M384 178l6-4" stroke="#777" stroke-width="2"/></g>
<!-- green north line -->
<rect class="gl" x="299.300" y="0" width="1.900" height="296" fill="#00f000"/>
</svg>
<svg style="left:16px;top:1036px" width="102" height="51" viewBox="0 0 596 296" preserveAspectRatio="none">
<defs>
<linearGradient id="pbsky" x1="0" y1="0" x2="0" y2="1"><stop offset="0" stop-color="#7c8bb0"/><stop offset="0.350" stop-color="#8c9fc8"/><stop offset="0.700" stop-color="#a9c0e2"/><stop offset="0.930" stop-color="#c9d8ea"/><stop offset="1" stop-color="#e6e0d6"/></linearGradient>
<radialGradient id="pbsun" cx="0.500" cy="0.500" r="0.500"><stop offset="0" stop-color="#fff" stop-opacity="1"/><stop offset="0.120" stop-color="#fff6e0" stop-opacity="0.950"/><stop offset="0.350" stop-color="#f4ead8" stop-opacity="0.600"/><stop offset="1" stop-color="#e8e4e0" stop-opacity="0"/></radialGradient>
<linearGradient id="pbgnd" x1="0" y1="0" x2="0" y2="1"><stop offset="0" stop-color="#34281a"/><stop offset="0.100" stop-color="#443220"/><stop offset="0.400" stop-color="#3e3022"/><stop offset="0.650" stop-color="#362e20"/><stop offset="0.900" stop-color="#2a2218"/><stop offset="1" stop-color="#18140e"/></linearGradient>
<filter id="pbb2" x="-20%" y="-20%" width="140%" height="140%"><feGaussianBlur stdDeviation="2"/></filter>
<filter id="pbb5" x="-30%" y="-30%" width="160%" height="160%"><feGaussianBlur stdDeviation="5"/></filter>
<filter id="pbb10" x="-30%" y="-30%" width="160%" height="160%"><feGaussianBlur stdDeviation="10"/></filter>
<filter id="pbspk" x="0" y="0" width="100%" height="100%"><feTurbulence type="fractalNoise" baseFrequency="0.600" numOctaves="2" seed="7" result="n"/><feColorMatrix in="n" type="matrix" values="0 0 0 0 0  0 0 0 0 0  0 0 0 0 0  0 0 0 9 -4.750" result="m"/><feComposite in="SourceGraphic" in2="m" operator="in"/></filter>
<filter id="pbspkD" x="0" y="0" width="100%" height="100%"><feTurbulence type="fractalNoise" baseFrequency="0.500" numOctaves="2" seed="13" result="n"/><feColorMatrix in="n" type="matrix" values="0 0 0 0 0  0 0 0 0 0  0 0 0 0 0  0 0 0 9 -3.600" result="m"/><feComposite in="SourceGraphic" in2="m" operator="in"/></filter>
<filter id="pblf" x="-5%" y="-5%" width="110%" height="110%"><feTurbulence type="fractalNoise" baseFrequency="0.300" numOctaves="2" seed="2" result="n"/><feColorMatrix in="n" type="matrix" values="0 0 0 0 0.150  0 0 0 0 0.130  0 0 0 0 0.050  0 0 0 5 -2.300" result="d"/><feGaussianBlur in="SourceGraphic" stdDeviation="1" result="b"/><feComposite in="d" in2="b" operator="in" result="dd"/><feMerge><feMergeNode in="b"/><feMergeNode in="dd"/></feMerge></filter>
<filter id="pbtex" x="0" y="0" width="100%" height="100%"><feTurbulence type="fractalNoise" baseFrequency="0.220 0.350" numOctaves="3" seed="3" result="n"/><feColorMatrix in="n" type="matrix" values="0 0 0 0 0.450  0 0 0 0 0.300  0 0 0 0 0.150  2.600 0 0 0 -1.050"/></filter>
<filter id="pbtex2" x="0" y="0" width="100%" height="100%"><feTurbulence type="fractalNoise" baseFrequency="0.180 0.300" numOctaves="3" seed="11" result="n"/><feColorMatrix in="n" type="matrix" values="0 0 0 0 0.050  0 0 0 0 0.040  0 0 0 0 0.020  0 2.800 0 0 -1.150"/></filter>
</defs>
<rect width="596" height="150" fill="url(#pbsky)"/>
<!-- sky brightening lower right / cirrus -->
<ellipse cx="430" cy="150" rx="200" ry="42" fill="#dfe8f2" opacity="0.550" filter="url(#pbb10)"/>
<ellipse cx="180" cy="140" rx="90" ry="60" fill="#e4ecf6" opacity="0.800" filter="url(#pbb10)"/>
<path d="M300 95q80-40 200-30" stroke="#c4d2ea" stroke-width="6" fill="none" opacity="0.500" filter="url(#pbb5)"/>
<path d="M190 60q40 20 90 70" stroke="#b4c6e4" stroke-width="7" fill="none" opacity="0.500" filter="url(#pbb5)"/>
<path d="M330 40q90-20 220 10" stroke="#a4b4d6" stroke-width="5" fill="none" opacity="0.450" filter="url(#pbb5)"/>
<!-- clouds -->
<g filter="url(#pbb2)"><ellipse cx="453" cy="86" rx="21" ry="5.500" fill="#f1e9e2"/><ellipse cx="466" cy="88" rx="9" ry="5" fill="#f6efe8"/>
<path d="M388 131q10-8 30-7q8-8 30-5q18 0 28 5q-8 10-40 10q-30 4-48-3z" fill="#e9dfd6"/><path d="M388 132q40 5 88-6q-10 10-44 10q-30 2-44-4z" fill="#8f96ae"/></g>
<!-- sun glow -->
<circle cx="81" cy="142" r="80" fill="url(#pbsun)"/><ellipse cx="135" cy="124" rx="50" ry="36" fill="#fbfcff" opacity="0.950" filter="url(#pbb10)"/><ellipse cx="110" cy="138" rx="60" ry="14" fill="#fff" opacity="0.900" filter="url(#pbb5)"/><ellipse cx="60" cy="128" rx="40" ry="26" fill="#f4efe8" opacity="0.700" filter="url(#pbb10)"/>
<!-- ground -->
<rect y="148" width="596" height="148" fill="url(#pbgnd)"/>
<path d="M300 148h160v7q-80 3-160 1z" fill="#8a6a42" opacity="0.800"/>
<path d="M0 150h296v4q-150 2-296 0z" fill="#46502a" opacity="0.700"/>
<path d="M0 215q150-14 300 0v60h-300z" fill="#3a3c26" opacity="0.550" filter="url(#pbb5)"/>
<path d="M300 232q150-12 296 0v40h-296z" fill="#3a3424" opacity="0.500" filter="url(#pbb5)"/>
<rect y="150" width="596" height="146" filter="url(#pbtex)" opacity="0.120"/>
<rect y="150" width="596" height="146" filter="url(#pbtex2)" opacity="0.250"/>
<path d="M0 296v-9q150-7 300-4q120-7 296 3v10z" fill="#181510" opacity="0.850" filter="url(#pbb2)"/>
<!-- left trees: orange leafy -->
<g opacity="0.800"><path d="M0 36q20-14 42-6q18 10 14 40q6 30-2 80h-54z" fill="#8e5a22"/><path d="M0 80q14-4 30 8q6 30 0 62h-30z" fill="#b4782c"/><path d="M0 110q20-4 50 6v34h-50z" fill="#6a3e1c"/></g>
<!-- bare trees crowns -->
<g opacity="0.500"><path d="M44 50q30-34 70-22q34-10 52 22q14 26 8 60q0 30-10 40h-120q-10-60 0-100z" fill="#2e1e38"/></g>
<g opacity="0.650"><path d="M44 112q8-14 20-10 10-12 24-6 12-10 26-2 14-8 26 2 12-4 22 8 10 4 8 20 4 14-2 26h-124q-6-20 0-38z" fill="#2a1820"/></g>
<g stroke="#1c1014" fill="none" stroke-linecap="round"><path d="M56 150v-70M62 150q-2-40 4-90M73 150v-60M82 150q-1-50-6-96M90 150q0-50 6-98M100 150q1-40-2-80M108 150q0-56 8-100M118 150q0-40 4-84M128 150q0-40-3-76M138 150q1-30 6-66M148 150q0-30-4-60" stroke-width="1.500"/><path d="M20 150v-50M30 150v-62M38 150v-40M10 150v-40" stroke-width="1.300" stroke="#2a1a14"/></g>
<ellipse cx="142" cy="134" rx="22" ry="18" fill="#5a5a26" filter="url(#pbb2)"/><ellipse cx="150" cy="140" rx="14" ry="11" fill="#3e3a1c" filter="url(#pbb2)"/>
<circle cx="81" cy="142" r="9" fill="#fff" filter="url(#pbb2)"/><circle cx="81" cy="142" r="14" fill="#ffd9a0" opacity="0.550" filter="url(#pbb5)"/>
<ellipse cx="82" cy="160" rx="30" ry="10" fill="#7a3030" opacity="0.350" filter="url(#pbb5)"/>
<!-- leafy tree group 2 -->
<g filter="url(#pblf)"><path d="M172 150q-4-30 6-48q10-16 24-18q14-6 28 0q16 6 14 26q12 10 12 40z" fill="#6e6424"/><path d="M190 96q16-14 36-8q10 8 6 24q-20 8-42-2z" fill="#94842c"/><path d="M176 150q0-24 10-30q30 8 66 2q6 14 4 28z" fill="#3c3a1a"/></g>
<path d="M196 150v-30M206 150v-34M218 150v-28M230 150v-26M240 150v-22" stroke="#241c10" stroke-width="1.400"/>
<g filter="url(#pbb2)"><ellipse cx="270" cy="138" rx="13" ry="12" fill="#6a6428"/><ellipse cx="290" cy="144" rx="9" ry="6" fill="#7a6a2c"/></g>
<!-- right trees -->
<g filter="url(#pblf)"><path d="M452 150q10-10 20-20q0-30 20-44q14-10 28-6q10-8 18 0q8 10 4 30q4 20 0 40z" fill="#7e6e2a"/><path d="M476 100q16-22 40-18q14 4 10 22q-20 14-50-4z" fill="#a08a34"/><path d="M456 150q8-14 30-18q30 4 56 0v18z" fill="#463e1c"/></g>
<g opacity="0.650"><path d="M534 92q20-12 46 0q10 20 6 58h-58q-4-36 6-58z" fill="#46342e"/><path d="M568 44q14-14 28-10v116h-22q-12-60-6-106z" fill="#7a4420"/></g><g opacity="0.500"><path d="M528 84q24-16 56-2v30h-60z" fill="#4a3a34"/><path d="M560 34q18-16 36-10v40h-38z" fill="#8a4c22"/></g>
<path d="M500 150v-40M512 150v-44M524 150v-36M540 150v-50M552 150v-46M562 150v-40M574 150v-70M584 150v-80" stroke="#2a2018" stroke-width="1.300"/>
<rect x="580" y="139" width="16" height="3" fill="#4a3020"/><path d="M582 142v8M594 142v8" stroke="#3a2418" stroke-width="1.400"/>
<path d="M296 147h70l10-1h30l46 2v2h-156z" fill="#6a5a38" opacity="0.700"/>
<!-- yellow landing pad -->
<ellipse cx="247.400" cy="244.400" rx="25.400" ry="11.800" fill="#c7a026"/><path d="M243 241.500l9 6M252 241.500l-9 6" stroke="#e8503a" stroke-width="1.800"/>
<g fill="#e8503a"><circle cx="224" cy="247" r="1"/><circle cx="231" cy="252.500" r="1"/><circle cx="247" cy="256" r="1"/><circle cx="263" cy="252.500" r="1"/><circle cx="271" cy="247" r="1"/><circle cx="263" cy="236" r="1"/><circle cx="231" cy="236" r="1"/></g>
<!-- tiny person -->
<g><ellipse cx="367.500" cy="146.500" rx="4.500" ry="4" fill="#5a3038"/><ellipse cx="367.500" cy="150.500" rx="3.600" ry="3.600" fill="#a87858"/>
<path d="M360 158q7.500-6 15 0l3 14 6 4-1 3-7-2 1 26q-9 4-17 0l1-24-6 2v-6z" fill="#3c4868"/><path d="M364 205h6v18h-6zM372 205h6v18h-6z" fill="#262a34"/><circle cx="357" cy="176" r="2" fill="#b88a68"/><path d="M384 178l6-4" stroke="#777" stroke-width="2"/></g>
<!-- green north line -->

</svg>
<svg style="left:11px;top:1027px" width="20" height="20" viewBox="-10 -10 20 20"><circle r="9" fill="#f7d21a"/><path d="M-9 0a9 9 0 0 0 18 0z" fill="#e8b80c" opacity="0.600"/></svg>
<span class="t" id="t97" style="left:17.5px;top:1029.50px;font-size:13px;line-height:16px;color:#222;font-weight:bold;">1</span>
<svg style="left:11px;top:1071px" width="20" height="18" viewBox="0 0 20 18"><path d="M1 12l5-6 3 3-5 6z" fill="#3c78c8"/><path d="M11 3l4-3 3 3-4 4z" fill="#3c78c8"/><path d="M6 7l5-4 4 4-5 5z" fill="#f0f0f0"/><path d="M10 12l4 4h-4z" fill="#ccc"/><rect x="14" y="13" width="5" height="4" fill="#8a9a78"/></svg>
</div>
</body></html>
